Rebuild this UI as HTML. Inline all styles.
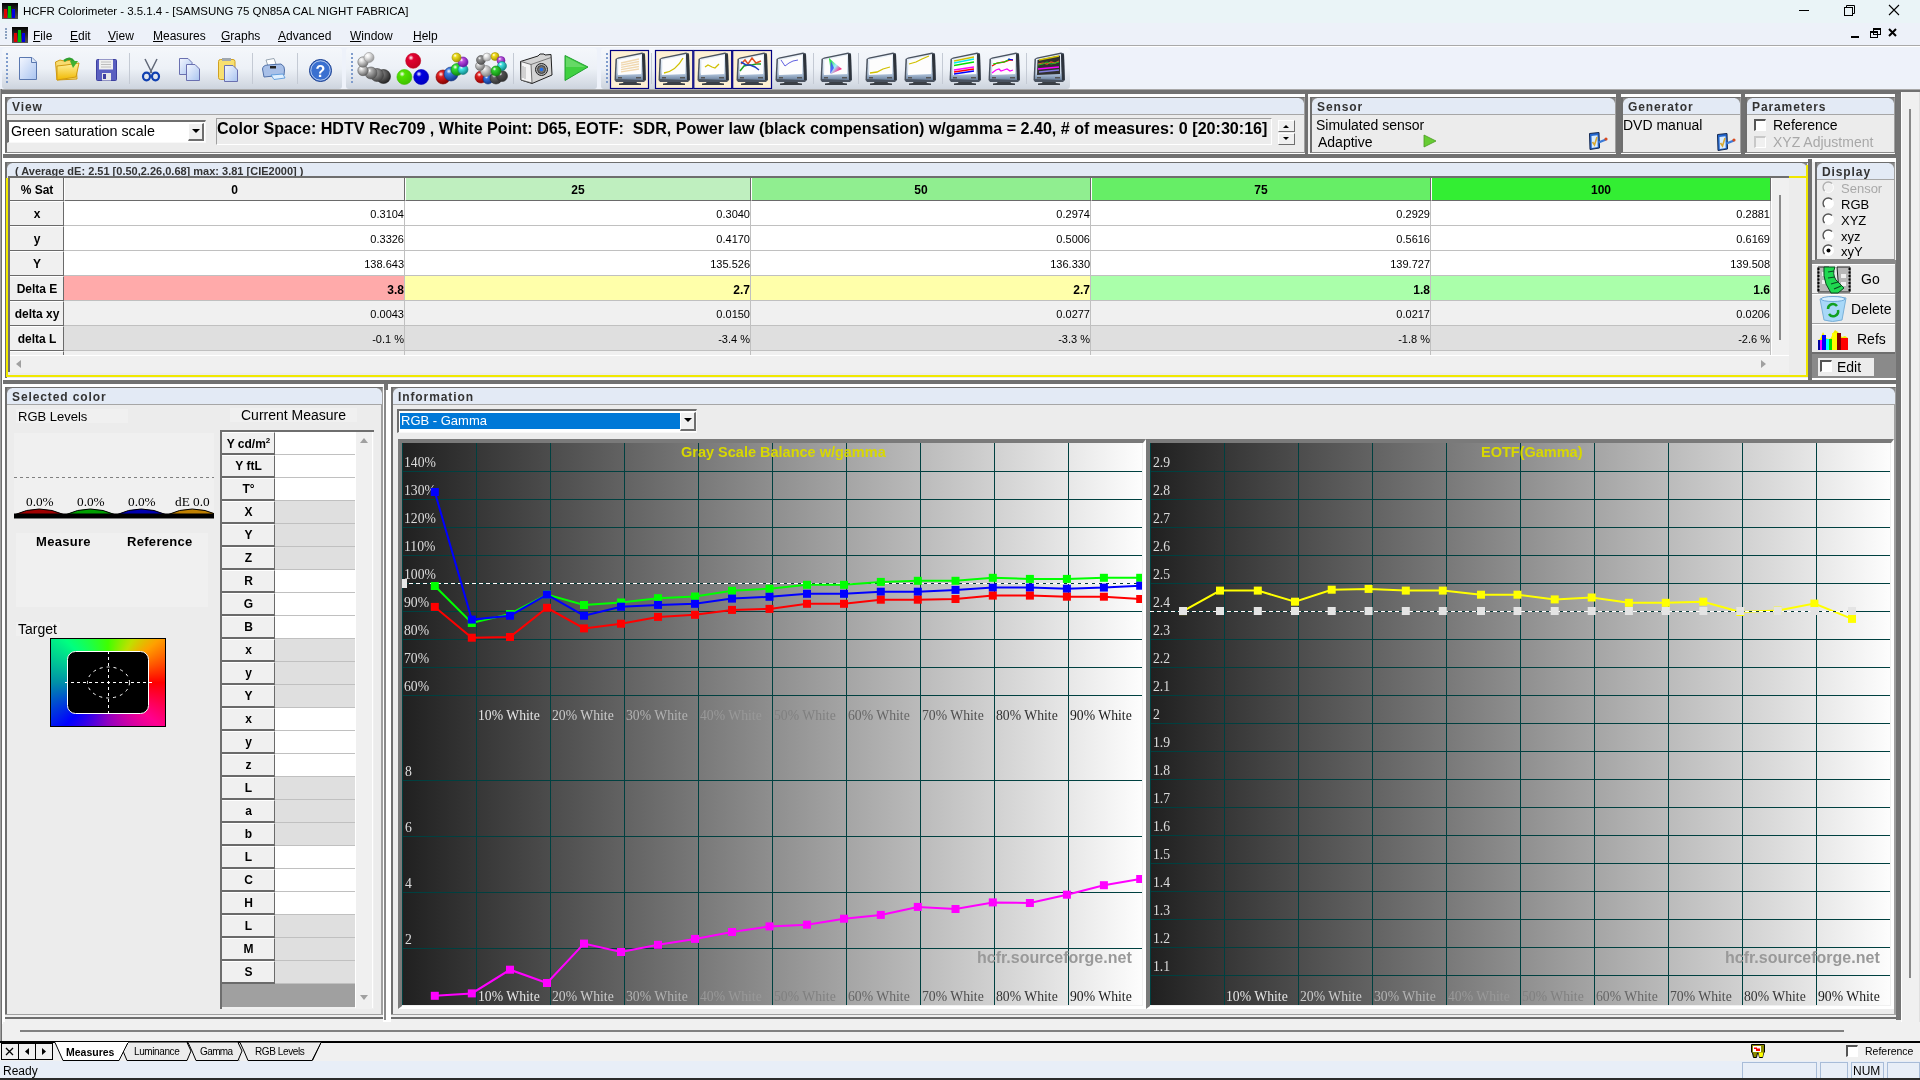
<!DOCTYPE html><html><head><meta charset="utf-8"><style>
html,body{margin:0;padding:0;width:1920px;height:1080px;overflow:hidden;background:#f0f0f0;font-family:"Liberation Sans",sans-serif;}
div{box-sizing:border-box;}
.u{text-decoration:underline;}
</style></head><body>
<div style="position:absolute;left:0px;top:0px;width:1920px;height:23px;background:#eaf4f7;"></div>
<svg style="position:absolute;left:2px;top:3px" width="16" height="16"><defs><linearGradient id="bg2" x1="0" y1="0" x2="0" y2="1"><stop offset="0" stop-color="#000"/><stop offset="1" stop-color="#555"/></linearGradient></defs><rect width="16" height="16" fill="url(#bg2)"/><rect x="2" y="6" width="3" height="9" fill="#e00000"/><rect x="6" y="3" width="3" height="12" fill="#00c000"/><rect x="10" y="6" width="3" height="9" fill="#0000e0"/></svg>
<div style="position:absolute;left:23px;top:6px;font-size:11.5px;line-height:1;color:#000;font-weight:normal;white-space:nowrap;font-family:'Liberation Sans', sans-serif;letter-spacing:-0.03px;">HCFR Colorimeter - 3.5.1.4 - [SAMSUNG 75 QN85A CAL NIGHT FABRICA]</div>
<svg style="position:absolute;left:1790px;top:0" width="130" height="23"><line x1="9" y1="10.5" x2="19" y2="10.5" stroke="#000" stroke-width="1"/><rect x="54.5" y="7.5" width="8" height="8" fill="none" stroke="#000"/><path d="M56.5 7.5 V5.5 H64.5 V13.5 H62.5" fill="none" stroke="#000"/><path d="M99 5 L109 15 M109 5 L99 15" stroke="#000" stroke-width="1.1"/></svg>
<div style="position:absolute;left:0px;top:23px;width:1920px;height:23px;background:#edf1f9;border-bottom:1px solid #a9a9a9;"></div>
<div style="position:absolute;left:5px;top:28px;width:2px;height:2px;background:#8aa0c0;"></div>
<div style="position:absolute;left:5px;top:31px;width:2px;height:2px;background:#8aa0c0;"></div>
<div style="position:absolute;left:5px;top:34px;width:2px;height:2px;background:#8aa0c0;"></div>
<div style="position:absolute;left:5px;top:37px;width:2px;height:2px;background:#8aa0c0;"></div>
<svg style="position:absolute;left:12px;top:27px" width="16" height="16"><defs><linearGradient id="bg12" x1="0" y1="0" x2="0" y2="1"><stop offset="0" stop-color="#000"/><stop offset="1" stop-color="#555"/></linearGradient></defs><rect width="16" height="16" fill="url(#bg12)"/><rect x="2" y="6" width="3" height="9" fill="#e00000"/><rect x="6" y="3" width="3" height="12" fill="#00c000"/><rect x="10" y="6" width="3" height="9" fill="#0000e0"/></svg>
<div style="position:absolute;left:33px;top:30px;font-size:12px;line-height:1;color:#000;font-weight:normal;white-space:nowrap;font-family:'Liberation Sans', sans-serif;"><span class="u">F</span>ile</div>
<div style="position:absolute;left:70px;top:30px;font-size:12px;line-height:1;color:#000;font-weight:normal;white-space:nowrap;font-family:'Liberation Sans', sans-serif;"><span class="u">E</span>dit</div>
<div style="position:absolute;left:108px;top:30px;font-size:12px;line-height:1;color:#000;font-weight:normal;white-space:nowrap;font-family:'Liberation Sans', sans-serif;"><span class="u">V</span>iew</div>
<div style="position:absolute;left:153px;top:30px;font-size:12px;line-height:1;color:#000;font-weight:normal;white-space:nowrap;font-family:'Liberation Sans', sans-serif;"><span class="u">M</span>easures</div>
<div style="position:absolute;left:221px;top:30px;font-size:12px;line-height:1;color:#000;font-weight:normal;white-space:nowrap;font-family:'Liberation Sans', sans-serif;"><span class="u">G</span>raphs</div>
<div style="position:absolute;left:278px;top:30px;font-size:12px;line-height:1;color:#000;font-weight:normal;white-space:nowrap;font-family:'Liberation Sans', sans-serif;"><span class="u">A</span>dvanced</div>
<div style="position:absolute;left:350px;top:30px;font-size:12px;line-height:1;color:#000;font-weight:normal;white-space:nowrap;font-family:'Liberation Sans', sans-serif;"><span class="u">W</span>indow</div>
<div style="position:absolute;left:413px;top:30px;font-size:12px;line-height:1;color:#000;font-weight:normal;white-space:nowrap;font-family:'Liberation Sans', sans-serif;"><span class="u">H</span>elp</div>
<svg style="position:absolute;left:1845px;top:26" width="75" height="17"><rect x="6" y="10" width="8" height="2" fill="#000"/><rect x="25.5" y="5.5" width="7" height="6" fill="none" stroke="#000"/><rect x="25" y="5" width="8" height="2" fill="#000"/><rect x="28.5" y="2.5" width="7" height="6" fill="none" stroke="#000"/><rect x="28" y="2" width="8" height="2" fill="#000"/><path d="M44 3 L51 10 M51 3 L44 10" stroke="#000" stroke-width="2"/></svg>
<div style="position:absolute;left:0px;top:46px;width:1920px;height:44px;background:#eef2fa;border-top:1px solid #fff;"></div>
<div style="position:absolute;left:2px;top:48px;width:340px;height:41px;background:linear-gradient(#f4f7fb,#edf1f7 50%,#cdd4de);border-radius:3px;"></div>
<div style="position:absolute;left:346px;top:48px;width:251px;height:41px;background:linear-gradient(#f4f7fb,#edf1f7 50%,#cdd4de);border-radius:3px;"></div>
<div style="position:absolute;left:601px;top:48px;width:469px;height:41px;background:linear-gradient(#f4f7fb,#edf1f7 50%,#cdd4de);border-radius:3px;"></div>
<div style="position:absolute;left:6px;top:53px;width:2px;height:2px;background:#7f9ccc;"></div>
<div style="position:absolute;left:6px;top:57px;width:2px;height:2px;background:#7f9ccc;"></div>
<div style="position:absolute;left:6px;top:61px;width:2px;height:2px;background:#7f9ccc;"></div>
<div style="position:absolute;left:6px;top:65px;width:2px;height:2px;background:#7f9ccc;"></div>
<div style="position:absolute;left:6px;top:69px;width:2px;height:2px;background:#7f9ccc;"></div>
<div style="position:absolute;left:6px;top:73px;width:2px;height:2px;background:#7f9ccc;"></div>
<div style="position:absolute;left:6px;top:77px;width:2px;height:2px;background:#7f9ccc;"></div>
<div style="position:absolute;left:6px;top:81px;width:2px;height:2px;background:#7f9ccc;"></div>
<div style="position:absolute;left:351px;top:53px;width:2px;height:2px;background:#7f9ccc;"></div>
<div style="position:absolute;left:351px;top:57px;width:2px;height:2px;background:#7f9ccc;"></div>
<div style="position:absolute;left:351px;top:61px;width:2px;height:2px;background:#7f9ccc;"></div>
<div style="position:absolute;left:351px;top:65px;width:2px;height:2px;background:#7f9ccc;"></div>
<div style="position:absolute;left:351px;top:69px;width:2px;height:2px;background:#7f9ccc;"></div>
<div style="position:absolute;left:351px;top:73px;width:2px;height:2px;background:#7f9ccc;"></div>
<div style="position:absolute;left:351px;top:77px;width:2px;height:2px;background:#7f9ccc;"></div>
<div style="position:absolute;left:351px;top:81px;width:2px;height:2px;background:#7f9ccc;"></div>
<div style="position:absolute;left:606px;top:53px;width:2px;height:2px;background:#7f9ccc;"></div>
<div style="position:absolute;left:606px;top:57px;width:2px;height:2px;background:#7f9ccc;"></div>
<div style="position:absolute;left:606px;top:61px;width:2px;height:2px;background:#7f9ccc;"></div>
<div style="position:absolute;left:606px;top:65px;width:2px;height:2px;background:#7f9ccc;"></div>
<div style="position:absolute;left:606px;top:69px;width:2px;height:2px;background:#7f9ccc;"></div>
<div style="position:absolute;left:606px;top:73px;width:2px;height:2px;background:#7f9ccc;"></div>
<div style="position:absolute;left:606px;top:77px;width:2px;height:2px;background:#7f9ccc;"></div>
<div style="position:absolute;left:606px;top:81px;width:2px;height:2px;background:#7f9ccc;"></div>
<svg style="position:absolute;left:0;top:46px" width="1100" height="43" viewBox="0 46 1100 43"><defs><linearGradient id="bez" x1="0" y1="0" x2="0" y2="1"><stop offset="0" stop-color="#eef4fa"/><stop offset="0.72" stop-color="#c8d6e6"/><stop offset="0.8" stop-color="#a8bcd4"/><stop offset="1" stop-color="#6a809c"/></linearGradient><linearGradient id="pg" x1="0" y1="0" x2="1" y2="1"><stop offset="0" stop-color="#f4f7ff"/><stop offset="1" stop-color="#a9c4f0"/></linearGradient><linearGradient id="fg" x1="0" y1="0" x2="0" y2="1"><stop offset="0" stop-color="#fff2a0"/><stop offset="1" stop-color="#f0b800"/></linearGradient></defs><line x1="129.5" y1="53" x2="129.5" y2="84" stroke="#c4cad4" stroke-width="1"/><line x1="252.5" y1="53" x2="252.5" y2="84" stroke="#c4cad4" stroke-width="1"/><line x1="297.5" y1="53" x2="297.5" y2="84" stroke="#c4cad4" stroke-width="1"/><line x1="513.5" y1="53" x2="513.5" y2="84" stroke="#c4cad4" stroke-width="1"/><line x1="651.5" y1="53" x2="651.5" y2="84" stroke="#c4cad4" stroke-width="1"/><line x1="813.5" y1="53" x2="813.5" y2="84" stroke="#c4cad4" stroke-width="1"/><line x1="858.5" y1="53" x2="858.5" y2="84" stroke="#c4cad4" stroke-width="1"/><line x1="942.5" y1="53" x2="942.5" y2="84" stroke="#c4cad4" stroke-width="1"/><line x1="1026.5" y1="53" x2="1026.5" y2="84" stroke="#c4cad4" stroke-width="1"/><path d="M19.5 57.5 H32 L36.5 62 V79.5 H19.5 Z" fill="url(#pg)" stroke="#5a78b0" stroke-width="1"/><path d="M31.5 57.5 V62.5 H36.5" fill="#dde8f8" stroke="#5a78b0"/><path d="M55.5 62 L60 60 L64 61 L73 60 L76 63 L77 79 L57 80 Z" fill="#f8dc70" stroke="#d09a10" stroke-width="1"/><path d="M57 66 L66 65 L79 63 L76 77 L57 80 Z" fill="url(#fg)" stroke="#d09a10" stroke-width="1"/><path d="M64 61 Q70 56 74 62" fill="none" stroke="#30a030" stroke-width="2.5"/><path d="M70 61 L78 61 L73 68 Z" fill="#40b030"/><rect x="96.5" y="59.5" width="20" height="21" rx="1" fill="#5a5fc0" stroke="#3c40a0"/><rect x="99" y="59.5" width="14" height="10" fill="#f0f0f0"/><path d="M101 62 H111 M101 64.5 H111 M101 67 H111" stroke="#b0b0b0" stroke-width="0.8"/><rect x="102" y="73" width="9" height="7.5" fill="#e8e8e8"/><rect x="103" y="74" width="3" height="5" fill="#4040a0"/><path d="M145 59 L152 73 M157 59 L150 73" stroke="#606878" stroke-width="1.5"/><ellipse cx="146.5" cy="76.5" rx="3.5" ry="3.8" fill="none" stroke="#1040b0" stroke-width="2.2"/><ellipse cx="155.5" cy="76.5" rx="3.5" ry="3.8" fill="none" stroke="#1040b0" stroke-width="2.2"/><path d="M179.5 58.5 H188 L192 62.5 V74.5 H179.5 Z" fill="url(#pg)" stroke="#6a70b0"/><path d="M186.5 64.5 H195 L199.5 69 V80.5 H186.5 Z" fill="url(#pg)" stroke="#6a70b0"/><rect x="218.5" y="59.5" width="16.5" height="20" rx="2" fill="#f8e070" stroke="#d0a020"/><rect x="222" y="58" width="9" height="3" fill="#a0a8b0"/><path d="M224.5 65.5 H233 L237.5 70 V81.5 H224.5 Z" fill="url(#pg)" stroke="#6a70b0"/><path d="M266 60 L274 58.5 L276 64 L268 66 Z" fill="#fff" stroke="#8090a0" stroke-width="0.8"/><path d="M262.5 69 Q263 65 268 65 L281 64 Q285 66 284.5 70 L284 75 L264 77 Z" fill="#a8c0e8" stroke="#5070a8"/><rect x="270" y="66" width="6" height="2.5" fill="#222"/><path d="M271 75 L283 74 L285 78 L274 79.5 Z" fill="#e0f0ff" stroke="#4a90d8" stroke-width="0.8"/><circle cx="320.5" cy="70.5" r="11" fill="#3a70d0" stroke="#1c4090" stroke-width="1"/><circle cx="320.5" cy="70.5" r="9.7" fill="none" stroke="#fff" stroke-width="0.8" opacity="0.8"/><text x="320.5" y="76.5" text-anchor="middle" font-family="Liberation Sans" font-weight="bold" font-size="16" fill="#fff">?</text><defs><radialGradient id="sp3835765" cx="0.35" cy="0.3" r="0.75"><stop offset="0" stop-color="#fff"/><stop offset="0.25" stop-color="#707070"/><stop offset="1" stop-color="#202020"/></radialGradient></defs><circle cx="383.5" cy="76.5" r="7" fill="url(#sp3835765)" stroke="#202020" stroke-width="0.6"/><defs><radialGradient id="sp3770750" cx="0.35" cy="0.3" r="0.75"><stop offset="0" stop-color="#fff"/><stop offset="0.25" stop-color="#909090"/><stop offset="1" stop-color="#404040"/></radialGradient></defs><circle cx="377" cy="75" r="6.5" fill="url(#sp3770750)" stroke="#404040" stroke-width="0.6"/><defs><radialGradient id="sp3710730" cx="0.35" cy="0.3" r="0.75"><stop offset="0" stop-color="#fff"/><stop offset="0.25" stop-color="#b0b0b0"/><stop offset="1" stop-color="#505050"/></radialGradient></defs><circle cx="371" cy="73" r="6" fill="url(#sp3710730)" stroke="#505050" stroke-width="0.6"/><defs><radialGradient id="sp3630705" cx="0.35" cy="0.3" r="0.75"><stop offset="0" stop-color="#fff"/><stop offset="0.25" stop-color="#d8d8d8"/><stop offset="1" stop-color="#606060"/></radialGradient></defs><circle cx="363" cy="70.5" r="5.2" fill="url(#sp3630705)" stroke="#606060" stroke-width="0.6"/><defs><radialGradient id="sp3630620" cx="0.35" cy="0.3" r="0.75"><stop offset="0" stop-color="#fff"/><stop offset="0.25" stop-color="#e0e0e0"/><stop offset="1" stop-color="#707070"/></radialGradient></defs><circle cx="363" cy="62" r="5.2" fill="url(#sp3630620)" stroke="#707070" stroke-width="0.6"/><defs><radialGradient id="sp3690575" cx="0.35" cy="0.3" r="0.75"><stop offset="0" stop-color="#fff"/><stop offset="0.25" stop-color="#f0f0f0"/><stop offset="1" stop-color="#909090"/></radialGradient></defs><circle cx="369" cy="57.5" r="5" fill="url(#sp3690575)" stroke="#909090" stroke-width="0.6"/><defs><radialGradient id="sp4132608" cx="0.35" cy="0.3" r="0.75"><stop offset="0" stop-color="#fff"/><stop offset="0.25" stop-color="#e00030"/><stop offset="1" stop-color="#c00020"/></radialGradient></defs><circle cx="413.2" cy="60.8" r="7.5" fill="url(#sp4132608)" stroke="#c00020" stroke-width="0.6"/><defs><radialGradient id="sp4044770" cx="0.35" cy="0.3" r="0.75"><stop offset="0" stop-color="#fff"/><stop offset="0.25" stop-color="#50e000"/><stop offset="1" stop-color="#40c000"/></radialGradient></defs><circle cx="404.4" cy="77" r="7.5" fill="url(#sp4044770)" stroke="#40c000" stroke-width="0.6"/><defs><radialGradient id="sp4212770" cx="0.35" cy="0.3" r="0.75"><stop offset="0" stop-color="#fff"/><stop offset="0.25" stop-color="#0000e0"/><stop offset="1" stop-color="#0000c0"/></radialGradient></defs><circle cx="421.2" cy="77" r="7.5" fill="url(#sp4212770)" stroke="#0000c0" stroke-width="0.6"/><defs><radialGradient id="sp4430770" cx="0.35" cy="0.3" r="0.75"><stop offset="0" stop-color="#fff"/><stop offset="0.25" stop-color="#e02020"/><stop offset="1" stop-color="#800000"/></radialGradient></defs><circle cx="443" cy="77" r="7" fill="url(#sp4430770)" stroke="#800000" stroke-width="0.6"/><defs><radialGradient id="sp4510740" cx="0.35" cy="0.3" r="0.75"><stop offset="0" stop-color="#fff"/><stop offset="0.25" stop-color="#4080e0"/><stop offset="1" stop-color="#103080"/></radialGradient></defs><circle cx="451" cy="74" r="7" fill="url(#sp4510740)" stroke="#103080" stroke-width="0.6"/><defs><radialGradient id="sp4570695" cx="0.35" cy="0.3" r="0.75"><stop offset="0" stop-color="#fff"/><stop offset="0.25" stop-color="#30e030"/><stop offset="1" stop-color="#108010"/></radialGradient></defs><circle cx="457" cy="69.5" r="6" fill="url(#sp4570695)" stroke="#108010" stroke-width="0.6"/><defs><radialGradient id="sp4630695" cx="0.35" cy="0.3" r="0.75"><stop offset="0" stop-color="#fff"/><stop offset="0.25" stop-color="#40e8e8"/><stop offset="1" stop-color="#108080"/></radialGradient></defs><circle cx="463" cy="69.5" r="5" fill="url(#sp4630695)" stroke="#108080" stroke-width="0.6"/><defs><radialGradient id="sp4630620" cx="0.35" cy="0.3" r="0.75"><stop offset="0" stop-color="#fff"/><stop offset="0.25" stop-color="#c050e0"/><stop offset="1" stop-color="#6010a0"/></radialGradient></defs><circle cx="463" cy="62" r="5" fill="url(#sp4630620)" stroke="#6010a0" stroke-width="0.6"/><defs><radialGradient id="sp4565575" cx="0.35" cy="0.3" r="0.75"><stop offset="0" stop-color="#fff"/><stop offset="0.25" stop-color="#f0e020"/><stop offset="1" stop-color="#a09000"/></radialGradient></defs><circle cx="456.5" cy="57.5" r="4.5" fill="url(#sp4565575)" stroke="#a09000" stroke-width="0.6"/><defs><radialGradient id="sp4810770" cx="0.35" cy="0.3" r="0.75"><stop offset="0" stop-color="#fff"/><stop offset="0.25" stop-color="#e02020"/><stop offset="1" stop-color="#900000"/></radialGradient></defs><circle cx="481" cy="77" r="6" fill="url(#sp4810770)" stroke="#900000" stroke-width="0.6"/><defs><radialGradient id="sp4880790" cx="0.35" cy="0.3" r="0.75"><stop offset="0" stop-color="#fff"/><stop offset="0.25" stop-color="#3070e0"/><stop offset="1" stop-color="#103080"/></radialGradient></defs><circle cx="488" cy="79" r="5" fill="url(#sp4880790)" stroke="#103080" stroke-width="0.6"/><defs><radialGradient id="sp4960780" cx="0.35" cy="0.3" r="0.75"><stop offset="0" stop-color="#fff"/><stop offset="0.25" stop-color="#606060"/><stop offset="1" stop-color="#303030"/></radialGradient></defs><circle cx="496" cy="78" r="6" fill="url(#sp4960780)" stroke="#303030" stroke-width="0.6"/><defs><radialGradient id="sp5020760" cx="0.35" cy="0.3" r="0.75"><stop offset="0" stop-color="#fff"/><stop offset="0.25" stop-color="#505050"/><stop offset="1" stop-color="#303030"/></radialGradient></defs><circle cx="502" cy="76" r="5.5" fill="url(#sp5020760)" stroke="#303030" stroke-width="0.6"/><defs><radialGradient id="sp4860710" cx="0.35" cy="0.3" r="0.75"><stop offset="0" stop-color="#fff"/><stop offset="0.25" stop-color="#d8d8d8"/><stop offset="1" stop-color="#808080"/></radialGradient></defs><circle cx="486" cy="71" r="5.5" fill="url(#sp4860710)" stroke="#808080" stroke-width="0.6"/><defs><radialGradient id="sp4800660" cx="0.35" cy="0.3" r="0.75"><stop offset="0" stop-color="#fff"/><stop offset="0.25" stop-color="#d0d0d0"/><stop offset="1" stop-color="#707070"/></radialGradient></defs><circle cx="480" cy="66" r="4.5" fill="url(#sp4800660)" stroke="#707070" stroke-width="0.6"/><defs><radialGradient id="sp4810600" cx="0.35" cy="0.3" r="0.75"><stop offset="0" stop-color="#fff"/><stop offset="0.25" stop-color="#909090"/><stop offset="1" stop-color="#505050"/></radialGradient></defs><circle cx="481" cy="60" r="4.5" fill="url(#sp4810600)" stroke="#505050" stroke-width="0.6"/><defs><radialGradient id="sp4870570" cx="0.35" cy="0.3" r="0.75"><stop offset="0" stop-color="#fff"/><stop offset="0.25" stop-color="#f0f0f0"/><stop offset="1" stop-color="#a0a0a0"/></radialGradient></defs><circle cx="487" cy="57" r="4" fill="url(#sp4870570)" stroke="#a0a0a0" stroke-width="0.6"/><defs><radialGradient id="sp4950565" cx="0.35" cy="0.3" r="0.75"><stop offset="0" stop-color="#fff"/><stop offset="0.25" stop-color="#f8e020"/><stop offset="1" stop-color="#a09000"/></radialGradient></defs><circle cx="495" cy="56.5" r="4" fill="url(#sp4950565)" stroke="#a09000" stroke-width="0.6"/><defs><radialGradient id="sp5010605" cx="0.35" cy="0.3" r="0.75"><stop offset="0" stop-color="#fff"/><stop offset="0.25" stop-color="#c060e0"/><stop offset="1" stop-color="#7010a0"/></radialGradient></defs><circle cx="501" cy="60.5" r="4" fill="url(#sp5010605)" stroke="#7010a0" stroke-width="0.6"/><defs><radialGradient id="sp5020660" cx="0.35" cy="0.3" r="0.75"><stop offset="0" stop-color="#fff"/><stop offset="0.25" stop-color="#40e0e0"/><stop offset="1" stop-color="#108080"/></radialGradient></defs><circle cx="502" cy="66" r="4.5" fill="url(#sp5020660)" stroke="#108080" stroke-width="0.6"/><defs><radialGradient id="sp4960710" cx="0.35" cy="0.3" r="0.75"><stop offset="0" stop-color="#fff"/><stop offset="0.25" stop-color="#30d030"/><stop offset="1" stop-color="#108010"/></radialGradient></defs><circle cx="496" cy="71" r="5" fill="url(#sp4960710)" stroke="#108010" stroke-width="0.6"/><path d="M520.5 61.5 L538 56 L540 54 L544 54 L545 55 L551 54.5 L552 75 L532 83.5 L521 80 Z" fill="#d4d4d4" stroke="#202020" stroke-width="1"/><path d="M521 61.5 L531 64.5 L532 83 L521 80 Z" fill="#f4f4f4" stroke="#505050" stroke-width="0.8"/><path d="M531 64.5 L551 57.5" stroke="#606060" stroke-width="0.8"/><path d="M523 66 V78 M525 67 V79" stroke="#a0a0a0" stroke-width="0.8"/><circle cx="541.5" cy="69.5" r="6" fill="#b0b0b0" stroke="#202020" stroke-width="1"/><circle cx="541.5" cy="69.5" r="4" fill="#707070" stroke="#303030" stroke-width="0.8"/><circle cx="541.5" cy="69.5" r="1.8" fill="#2070f0"/><path d="M565 55.5 L588 67 L565 80.5 Z" fill="#40d040" stroke="#20a030" stroke-width="1"/><path d="M566 57 L585 67 L566 67 Z" fill="#80e080" opacity="0.6"/><rect x="610.5" y="50.5" width="38" height="38" fill="#fdf0d4" stroke="#000080" stroke-width="1.2"/><rect x="655.5" y="50.5" width="37.299999999999955" height="38" fill="#fdf0d4" stroke="#000080" stroke-width="1.2"/><rect x="693.8" y="50.5" width="37.90000000000009" height="38" fill="#fdf0d4" stroke="#000080" stroke-width="1.2"/><rect x="732.7" y="50.5" width="38.799999999999955" height="38" fill="#fdf0d4" stroke="#000080" stroke-width="1.2"/><g transform="translate(614,49)"><path d="M10 32 L22 32 L23 34 L27 34.5 L27 36 L5 36 L5 34.5 L9 34 Z" fill="#3a3f46"/><path d="M0.5 31 L1.5 10 L4 8.5 L28 3.5 L31 4.5 L32 31 L30 33 L2 33 Z" fill="#4a5360"/><path d="M2 30 L3 10 L28 5 L29 31 Z" fill="url(#bez)"/><path d="M28 5 L31 5.5 L31.5 31 L29 31 Z" fill="#2e343c"/><path d="M4 26 L4.5 11 L27 6.5 L27 25 Z" fill="#fdfdfd"/><rect x="4" y="28" width="4" height="1.5" fill="#555"/><rect x="22" y="28" width="5" height="1.5" fill="#555"/><path d="M7 14.0 L25 10.0" stroke="#f0d8b0" stroke-width="1.3"/><path d="M7 16.2 L25 12.5" stroke="#f0d8b0" stroke-width="1.3"/><path d="M7 18.4 L25 15.0" stroke="#f0d8b0" stroke-width="1.3"/><path d="M7 20.6 L25 17.5" stroke="#f0d8b0" stroke-width="1.3"/><path d="M7 22.8 L25 20.0" stroke="#f0d8b0" stroke-width="1.3"/></g><g transform="translate(658,49)"><path d="M10 32 L22 32 L23 34 L27 34.5 L27 36 L5 36 L5 34.5 L9 34 Z" fill="#3a3f46"/><path d="M0.5 31 L1.5 10 L4 8.5 L28 3.5 L31 4.5 L32 31 L30 33 L2 33 Z" fill="#4a5360"/><path d="M2 30 L3 10 L28 5 L29 31 Z" fill="url(#bez)"/><path d="M28 5 L31 5.5 L31.5 31 L29 31 Z" fill="#2e343c"/><path d="M4 26 L4.5 11 L27 6.5 L27 25 Z" fill="#fdfdfd"/><rect x="4" y="28" width="4" height="1.5" fill="#555"/><rect x="22" y="28" width="5" height="1.5" fill="#555"/><path d="M6 24 Q18 22 25 9" fill="none" stroke="#d0c000" stroke-width="1.3"/></g><g transform="translate(697,49)"><path d="M10 32 L22 32 L23 34 L27 34.5 L27 36 L5 36 L5 34.5 L9 34 Z" fill="#3a3f46"/><path d="M0.5 31 L1.5 10 L4 8.5 L28 3.5 L31 4.5 L32 31 L30 33 L2 33 Z" fill="#4a5360"/><path d="M2 30 L3 10 L28 5 L29 31 Z" fill="url(#bez)"/><path d="M28 5 L31 5.5 L31.5 31 L29 31 Z" fill="#2e343c"/><path d="M4 26 L4.5 11 L27 6.5 L27 25 Z" fill="#fdfdfd"/><rect x="4" y="28" width="4" height="1.5" fill="#555"/><rect x="22" y="28" width="5" height="1.5" fill="#555"/><path d="M8 18 L11 16 L15 18 L18 19 L22 15" fill="none" stroke="#d0c000" stroke-width="1.3"/></g><g transform="translate(736,49)"><path d="M10 32 L22 32 L23 34 L27 34.5 L27 36 L5 36 L5 34.5 L9 34 Z" fill="#3a3f46"/><path d="M0.5 31 L1.5 10 L4 8.5 L28 3.5 L31 4.5 L32 31 L30 33 L2 33 Z" fill="#4a5360"/><path d="M2 30 L3 10 L28 5 L29 31 Z" fill="url(#bez)"/><path d="M28 5 L31 5.5 L31.5 31 L29 31 Z" fill="#2e343c"/><path d="M4 26 L4.5 11 L27 6.5 L27 25 Z" fill="#fdfdfd"/><rect x="4" y="28" width="4" height="1.5" fill="#555"/><rect x="22" y="28" width="5" height="1.5" fill="#555"/><path d="M4 22 L8 17 L12 16 L16 16 L20 15 L25 15" fill="none" stroke="#20a020" stroke-width="1.5"/><path d="M5 15 L9 11 L12 15 L16 9 L20 14 L25 12" fill="none" stroke="#e05020" stroke-width="1.5"/><path d="M5 13 L10 16 L14 16 L19 18 L23 21" fill="none" stroke="#2040c0" stroke-width="1.5"/></g><g transform="translate(775,49)"><path d="M10 32 L22 32 L23 34 L27 34.5 L27 36 L5 36 L5 34.5 L9 34 Z" fill="#3a3f46"/><path d="M0.5 31 L1.5 10 L4 8.5 L28 3.5 L31 4.5 L32 31 L30 33 L2 33 Z" fill="#4a5360"/><path d="M2 30 L3 10 L28 5 L29 31 Z" fill="url(#bez)"/><path d="M28 5 L31 5.5 L31.5 31 L29 31 Z" fill="#2e343c"/><path d="M4 26 L4.5 11 L27 6.5 L27 25 Z" fill="#fdfdfd"/><rect x="4" y="28" width="4" height="1.5" fill="#555"/><rect x="22" y="28" width="5" height="1.5" fill="#555"/><path d="M6 11 L10 17 L14 14 L18 12 L23 11" fill="none" stroke="#6060e0" stroke-width="1"/></g><g transform="translate(820,49)"><path d="M10 32 L22 32 L23 34 L27 34.5 L27 36 L5 36 L5 34.5 L9 34 Z" fill="#3a3f46"/><path d="M0.5 31 L1.5 10 L4 8.5 L28 3.5 L31 4.5 L32 31 L30 33 L2 33 Z" fill="#4a5360"/><path d="M2 30 L3 10 L28 5 L29 31 Z" fill="url(#bez)"/><path d="M28 5 L31 5.5 L31.5 31 L29 31 Z" fill="#2e343c"/><path d="M4 26 L4.5 11 L27 6.5 L27 25 Z" fill="#fdfdfd"/><rect x="4" y="28" width="4" height="1.5" fill="#555"/><rect x="22" y="28" width="5" height="1.5" fill="#555"/><defs><linearGradient id="cie" x1="0" y1="0" x2="1" y2="1"><stop offset="0" stop-color="#00e000"/><stop offset="0.5" stop-color="#a0f0ff"/><stop offset="0.8" stop-color="#ff2080"/><stop offset="1" stop-color="#ff0000"/></linearGradient></defs><path d="M9 9 Q12 12 22 20 L11 25 Z" fill="url(#cie)"/><path d="M10 25 L14 19 L11 12" fill="#3030ff" opacity="0.7"/></g><g transform="translate(865,49)"><path d="M10 32 L22 32 L23 34 L27 34.5 L27 36 L5 36 L5 34.5 L9 34 Z" fill="#3a3f46"/><path d="M0.5 31 L1.5 10 L4 8.5 L28 3.5 L31 4.5 L32 31 L30 33 L2 33 Z" fill="#4a5360"/><path d="M2 30 L3 10 L28 5 L29 31 Z" fill="url(#bez)"/><path d="M28 5 L31 5.5 L31.5 31 L29 31 Z" fill="#2e343c"/><path d="M4 26 L4.5 11 L27 6.5 L27 25 Z" fill="#fdfdfd"/><rect x="4" y="28" width="4" height="1.5" fill="#555"/><rect x="22" y="28" width="5" height="1.5" fill="#555"/><path d="M5 24 L12 23 L18 20 L25 18" fill="none" stroke="#d0c000" stroke-width="1.3"/></g><g transform="translate(904,49)"><path d="M10 32 L22 32 L23 34 L27 34.5 L27 36 L5 36 L5 34.5 L9 34 Z" fill="#3a3f46"/><path d="M0.5 31 L1.5 10 L4 8.5 L28 3.5 L31 4.5 L32 31 L30 33 L2 33 Z" fill="#4a5360"/><path d="M2 30 L3 10 L28 5 L29 31 Z" fill="url(#bez)"/><path d="M28 5 L31 5.5 L31.5 31 L29 31 Z" fill="#2e343c"/><path d="M4 26 L4.5 11 L27 6.5 L27 25 Z" fill="#fdfdfd"/><rect x="4" y="28" width="4" height="1.5" fill="#555"/><rect x="22" y="28" width="5" height="1.5" fill="#555"/><path d="M5 15 L12 13 L18 10 L25 7" fill="none" stroke="#d0c000" stroke-width="1.3"/></g><g transform="translate(949,49)"><path d="M10 32 L22 32 L23 34 L27 34.5 L27 36 L5 36 L5 34.5 L9 34 Z" fill="#3a3f46"/><path d="M0.5 31 L1.5 10 L4 8.5 L28 3.5 L31 4.5 L32 31 L30 33 L2 33 Z" fill="#4a5360"/><path d="M2 30 L3 10 L28 5 L29 31 Z" fill="url(#bez)"/><path d="M28 5 L31 5.5 L31.5 31 L29 31 Z" fill="#2e343c"/><path d="M4 26 L4.5 11 L27 6.5 L27 25 Z" fill="#fdfdfd"/><rect x="4" y="28" width="4" height="1.5" fill="#555"/><rect x="22" y="28" width="5" height="1.5" fill="#555"/><path d="M5 12 L25 8" stroke="#d0c000" stroke-width="1.3"/><path d="M5 14 L25 10" stroke="#00e8f0" stroke-width="1.3"/><path d="M5 16.5 L25 13" stroke="#00e000" stroke-width="1.3"/><path d="M5 21 L25 18" stroke="#ff00ff" stroke-width="1.3"/><path d="M5 23 L25 20" stroke="#f00" stroke-width="1.3"/><path d="M5 25 L25 22" stroke="#00f" stroke-width="1.3"/></g><g transform="translate(988,49)"><path d="M10 32 L22 32 L23 34 L27 34.5 L27 36 L5 36 L5 34.5 L9 34 Z" fill="#3a3f46"/><path d="M0.5 31 L1.5 10 L4 8.5 L28 3.5 L31 4.5 L32 31 L30 33 L2 33 Z" fill="#4a5360"/><path d="M2 30 L3 10 L28 5 L29 31 Z" fill="url(#bez)"/><path d="M28 5 L31 5.5 L31.5 31 L29 31 Z" fill="#2e343c"/><path d="M4 26 L4.5 11 L27 6.5 L27 25 Z" fill="#fdfdfd"/><rect x="4" y="28" width="4" height="1.5" fill="#555"/><rect x="22" y="28" width="5" height="1.5" fill="#555"/><path d="M4 17 L9 14 L16 13 L22 11 L25 11" fill="none" stroke="#f00" stroke-width="1.3"/><path d="M5 15 L10 14 L16 13 L22 10" fill="none" stroke="#00e000" stroke-width="1.2"/><path d="M20 10 L25 11" stroke="#0000ff" stroke-width="1.2"/><path d="M4 24 L8 21 L11 20 L13 22 L16 21 L19 20 L22 22 L25 21" fill="none" stroke="#ff00ff" stroke-width="1.3"/></g><g transform="translate(1033,49)"><path d="M10 32 L22 32 L23 34 L27 34.5 L27 36 L5 36 L5 34.5 L9 34 Z" fill="#3a3f46"/><path d="M0.5 31 L1.5 10 L4 8.5 L28 3.5 L31 4.5 L32 31 L30 33 L2 33 Z" fill="#4a5360"/><path d="M2 30 L3 10 L28 5 L29 31 Z" fill="url(#bez)"/><path d="M28 5 L31 5.5 L31.5 31 L29 31 Z" fill="#2e343c"/><path d="M4 26 L4.5 11 L27 6.5 L27 25 Z" fill="#303030"/><rect x="4" y="28" width="4" height="1.5" fill="#555"/><rect x="22" y="28" width="5" height="1.5" fill="#555"/><path d="M6 11 L26 7" stroke="#d0c000" stroke-width="1.3"/><path d="M5 15 L10 14 L14 15 L18 13 L22 14 L26 12" fill="none" stroke="#e06020" stroke-width="1.2"/><path d="M5 16 L10 15 L14 13 L18 15 L26 13" fill="none" stroke="#20c020" stroke-width="1"/><path d="M5 20 L26 18" stroke="#ff00ff" stroke-width="1.3"/><path d="M6 23 L26 21" stroke="#8080e0" stroke-width="1.3"/></g></svg>
<div style="position:absolute;left:0px;top:89px;width:1920px;height:1px;background:#a8a8a8;"></div>
<div style="position:absolute;left:0px;top:90px;width:1920px;height:4px;background:#717171;"></div>
<div style="position:absolute;left:0px;top:89px;width:2px;height:953px;background:#a0a0a0;border-right:1px solid #6e6e6e;"></div>
<div style="position:absolute;left:2px;top:94px;width:3px;height:930px;background:#fff;"></div>
<div style="position:absolute;left:5px;top:94px;width:1915px;height:986px;background:#f0f0f0;"></div>
<div style="position:absolute;left:3px;top:94px;width:1897px;height:3px;background:#fff;"></div>
<div style="position:absolute;left:3px;top:153px;width:1897px;height:1px;background:#fff;"></div>
<div style="position:absolute;left:3px;top:154px;width:1893px;height:4px;background:#717171;"></div>
<div style="position:absolute;left:3px;top:158px;width:1893px;height:4px;background:#fff;"></div>
<div style="position:absolute;left:5px;top:97px;width:1300px;height:56px;background:#ececec;border-top:1px solid #6e6e6e;border-left:2px solid #6e6e6e;border-right:1px solid #a0a0a0;border-bottom:1px solid #8a8a8a;"></div>
<div style="position:absolute;left:7px;top:98px;width:5px;height:5px;background:#8a8a8a;"></div>
<div style="position:absolute;left:1299px;top:98px;width:5px;height:5px;background:#8a8a8a;"></div>
<div style="position:absolute;left:7px;top:98px;width:1297px;height:17px;background:#e3eaf5;border-top-left-radius:6px;border-top-right-radius:6px;border-bottom:1px solid #a6a6a6;"></div>
<div style="position:absolute;left:12px;top:101px;font-size:12px;line-height:1;color:#333;font-weight:bold;white-space:nowrap;font-family:'Liberation Sans', sans-serif;letter-spacing:0.9px">View</div>
<div style="position:absolute;left:7px;top:120px;width:199px;height:23px;background:#fff;border-top:2px solid #6e6e6e;border-left:2px solid #6e6e6e;border-bottom:1px solid #f8f8f8;border-right:1px solid #f8f8f8;"></div>
<div style="position:absolute;left:11px;top:124px;font-size:14.3px;line-height:1;color:#000;font-weight:normal;white-space:nowrap;font-family:'Liberation Sans', sans-serif;">Green saturation scale</div>
<div style="position:absolute;left:188px;top:123px;width:16px;height:18px;background:#f0f0f0;border-right:2px solid #6e6e6e;border-bottom:2px solid #6e6e6e;border-top:1px solid #fff;border-left:1px solid #fff;"></div>
<svg style="position:absolute;left:190px;top:129px" width="12" height="6"><path d="M2 0 H10 L6 4 Z" fill="#000"/></svg>
<div style="position:absolute;left:216px;top:118px;width:1056px;height:27px;background:#ececec;border-top:1px solid #a0a0a0;border-left:1px solid #a0a0a0;border-bottom:1px solid #fff;border-right:1px solid #fff;"></div>
<div style="position:absolute;left:217px;top:120px;font-size:16.1px;line-height:1;color:#000;font-weight:bold;white-space:nowrap;font-family:'Liberation Sans', sans-serif;">Color Space: HDTV Rec709 , White Point: D65, EOTF:&nbsp; SDR, Power law (black compensation) w/gamma = 2.40, # of measures: 0 [20:30:16]</div>
<div style="position:absolute;left:1278px;top:120px;width:17px;height:12px;background:#f0f0f0;border-right:1px solid #6e6e6e;border-bottom:1px solid #6e6e6e;border-top:1px solid #fff;border-left:1px solid #fff;"></div>
<div style="position:absolute;left:1278px;top:133px;width:17px;height:12px;background:#f0f0f0;border-right:1px solid #6e6e6e;border-bottom:1px solid #6e6e6e;border-top:1px solid #fff;border-left:1px solid #fff;"></div>
<svg style="position:absolute;left:1281px;top:123px" width="10" height="20"><path d="M2 5 H8 L5 2 Z" fill="#000"/><path d="M2 14 H8 L5 17 Z" fill="#000"/></svg>
<div style="position:absolute;left:1305px;top:94px;width:3px;height:62px;background:#717171;"></div>
<div style="position:absolute;left:1310px;top:97px;width:306px;height:56px;background:#ececec;border-top:1px solid #6e6e6e;border-left:2px solid #6e6e6e;border-right:1px solid #a0a0a0;border-bottom:1px solid #8a8a8a;"></div>
<div style="position:absolute;left:1312px;top:98px;width:5px;height:5px;background:#8a8a8a;"></div>
<div style="position:absolute;left:1610px;top:98px;width:5px;height:5px;background:#8a8a8a;"></div>
<div style="position:absolute;left:1312px;top:98px;width:303px;height:17px;background:#e3eaf5;border-top-left-radius:6px;border-top-right-radius:6px;border-bottom:1px solid #a6a6a6;"></div>
<div style="position:absolute;left:1317px;top:101px;font-size:12px;line-height:1;color:#333;font-weight:bold;white-space:nowrap;font-family:'Liberation Sans', sans-serif;letter-spacing:0.9px">Sensor</div>
<div style="position:absolute;left:1316px;top:118px;font-size:14px;line-height:1;color:#000;font-weight:normal;white-space:nowrap;font-family:'Liberation Sans', sans-serif;">Simulated sensor</div>
<div style="position:absolute;left:1318px;top:135px;font-size:14px;line-height:1;color:#000;font-weight:normal;white-space:nowrap;font-family:'Liberation Sans', sans-serif;">Adaptive</div>
<svg style="position:absolute;left:1423px;top:134px" width="14" height="14"><path d="M1 1 L13 7 L1 13 Z" fill="#66cc33" stroke="#4a9a22" stroke-width="0.8"/></svg>
<svg style="position:absolute;left:1588px;top:131px" width="22" height="20"><path d="M1.5 2.5 L11 1.5 L11.5 17 L2 18.5 Z" fill="#2468d0" stroke="#142850" stroke-width="1"/><path d="M3.5 5 L9.5 4.3 L9.7 16 L3.8 17 Z" fill="#d8ecff"/><path d="M4.5 11 L6.5 14 L9 6" fill="none" stroke="#d8a830" stroke-width="1.6"/><path d="M10.5 11.5 L18 8.5" stroke="#3a7ad8" stroke-width="2.2"/><circle cx="18" cy="8" r="1.6" fill="#d84a20"/></svg>
<div style="position:absolute;left:1616px;top:94px;width:5px;height:62px;background:#717171;"></div>
<div style="position:absolute;left:1621px;top:97px;width:120px;height:56px;background:#ececec;border-top:1px solid #6e6e6e;border-left:2px solid #6e6e6e;border-right:1px solid #a0a0a0;border-bottom:1px solid #8a8a8a;"></div>
<div style="position:absolute;left:1623px;top:98px;width:5px;height:5px;background:#8a8a8a;"></div>
<div style="position:absolute;left:1735px;top:98px;width:5px;height:5px;background:#8a8a8a;"></div>
<div style="position:absolute;left:1623px;top:98px;width:117px;height:17px;background:#e3eaf5;border-top-left-radius:6px;border-top-right-radius:6px;border-bottom:1px solid #a6a6a6;"></div>
<div style="position:absolute;left:1628px;top:101px;font-size:12px;line-height:1;color:#333;font-weight:bold;white-space:nowrap;font-family:'Liberation Sans', sans-serif;letter-spacing:0.9px">Generator</div>
<div style="position:absolute;left:1623px;top:118px;font-size:14px;line-height:1;color:#000;font-weight:normal;white-space:nowrap;font-family:'Liberation Sans', sans-serif;">DVD manual</div>
<svg style="position:absolute;left:1716px;top:132px" width="22" height="20"><path d="M1.5 2.5 L11 1.5 L11.5 17 L2 18.5 Z" fill="#2468d0" stroke="#142850" stroke-width="1"/><path d="M3.5 5 L9.5 4.3 L9.7 16 L3.8 17 Z" fill="#d8ecff"/><path d="M4.5 11 L6.5 14 L9 6" fill="none" stroke="#d8a830" stroke-width="1.6"/><path d="M10.5 11.5 L18 8.5" stroke="#3a7ad8" stroke-width="2.2"/><circle cx="18" cy="8" r="1.6" fill="#d84a20"/></svg>
<div style="position:absolute;left:1741px;top:94px;width:4px;height:62px;background:#717171;"></div>
<div style="position:absolute;left:1745px;top:97px;width:150px;height:56px;background:#ececec;border-top:1px solid #6e6e6e;border-left:2px solid #6e6e6e;border-right:1px solid #a0a0a0;border-bottom:1px solid #8a8a8a;"></div>
<div style="position:absolute;left:1747px;top:98px;width:5px;height:5px;background:#8a8a8a;"></div>
<div style="position:absolute;left:1889px;top:98px;width:5px;height:5px;background:#8a8a8a;"></div>
<div style="position:absolute;left:1747px;top:98px;width:147px;height:17px;background:#e3eaf5;border-top-left-radius:6px;border-top-right-radius:6px;border-bottom:1px solid #a6a6a6;"></div>
<div style="position:absolute;left:1752px;top:101px;font-size:12px;line-height:1;color:#333;font-weight:bold;white-space:nowrap;font-family:'Liberation Sans', sans-serif;letter-spacing:0.9px">Parameters</div>
<div style="position:absolute;left:1754px;top:119px;width:12px;height:12px;background:#fff;border-top:2px solid #555;border-left:2px solid #555;border-right:1px solid #fff;border-bottom:1px solid #fff;"></div>
<div style="position:absolute;left:1773px;top:118px;font-size:14px;line-height:1;color:#000;font-weight:normal;white-space:nowrap;font-family:'Liberation Sans', sans-serif;">Reference</div>
<div style="position:absolute;left:1754px;top:136px;width:12px;height:12px;background:#f0f0f0;border-top:2px solid #c8c8c8;border-left:2px solid #c8c8c8;border-right:1px solid #fff;border-bottom:1px solid #fff;"></div>
<div style="position:absolute;left:1773px;top:135px;font-size:14px;line-height:1;color:#a8a8a8;font-weight:normal;white-space:nowrap;font-family:'Liberation Sans', sans-serif;">XYZ Adjustment</div>
<div style="position:absolute;left:1895px;top:94px;width:5px;height:62px;background:#717171;"></div>
<div style="position:absolute;left:5px;top:162px;width:1803px;height:216px;background:#ececec;border-top:1px solid #6e6e6e;border-left:2px solid #6e6e6e;"></div>
<div style="position:absolute;left:7px;top:163px;width:5px;height:5px;background:#8a8a8a;"></div>
<div style="position:absolute;left:1802px;top:163px;width:5px;height:5px;background:#8a8a8a;"></div>
<div style="position:absolute;left:7px;top:163px;width:1800px;height:14px;background:#e3eaf5;border-top-left-radius:6px;border-top-right-radius:6px;"></div>
<div style="position:absolute;left:15px;top:166px;font-size:11px;line-height:1;color:#333;font-weight:bold;white-space:nowrap;font-family:'Liberation Sans', sans-serif;">( Average dE: 2.51 [0.50,2.26,0.68] max: 3.81 [CIE2000] )</div>
<div style="position:absolute;left:6px;top:178px;width:2px;height:199px;background:#f0e800;"></div>
<div style="position:absolute;left:6px;top:375px;width:1802px;height:2px;background:#f0e800;"></div>
<div style="position:absolute;left:1806px;top:165px;width:2px;height:212px;background:#f0e800;"></div>
<div style="position:absolute;left:1789px;top:176px;width:19px;height:2px;background:#f0e800;"></div>
<div style="position:absolute;left:8px;top:176px;width:1781px;height:2px;background:#6e6e6e;"></div>
<div style="position:absolute;left:8px;top:176px;width:2px;height:196px;background:#6e6e6e;"></div>
<div style="position:absolute;left:10px;top:178px;width:1761px;height:177px;overflow:hidden;">
<div style="position:absolute;left:0px;top:0px;width:54px;height:23px;background:#f0f0f0;border-right:1px solid #6a6a6a;border-bottom:1px solid #6a6a6a;"></div>
<div style="position:absolute;left:0px;top:6px;font-size:12px;line-height:1;color:#000;font-weight:bold;white-space:nowrap;"><div style="width:54px;text-align:center">% Sat</div></div>
<div style="position:absolute;left:54px;top:0px;width:341px;height:23px;background:#f0f0f0;border-right:1px solid #6a6a6a;border-bottom:1px solid #6a6a6a;border-left:1px solid #fff;"></div>
<div style="position:absolute;left:54px;top:6px;font-size:12px;line-height:1;color:#000;font-weight:bold;white-space:nowrap;"><div style="width:341px;text-align:center">0</div></div>
<div style="position:absolute;left:395px;top:0px;width:346px;height:23px;background:#bfefbf;border-right:1px solid #6a6a6a;border-bottom:1px solid #6a6a6a;border-left:1px solid #fff;"></div>
<div style="position:absolute;left:395px;top:6px;font-size:12px;line-height:1;color:#000;font-weight:bold;white-space:nowrap;"><div style="width:346px;text-align:center">25</div></div>
<div style="position:absolute;left:741px;top:0px;width:340px;height:23px;background:#90ee90;border-right:1px solid #6a6a6a;border-bottom:1px solid #6a6a6a;border-left:1px solid #fff;"></div>
<div style="position:absolute;left:741px;top:6px;font-size:12px;line-height:1;color:#000;font-weight:bold;white-space:nowrap;"><div style="width:340px;text-align:center">50</div></div>
<div style="position:absolute;left:1081px;top:0px;width:340px;height:23px;background:#66ee66;border-right:1px solid #6a6a6a;border-bottom:1px solid #6a6a6a;border-left:1px solid #fff;"></div>
<div style="position:absolute;left:1081px;top:6px;font-size:12px;line-height:1;color:#000;font-weight:bold;white-space:nowrap;"><div style="width:340px;text-align:center">75</div></div>
<div style="position:absolute;left:1421px;top:0px;width:340px;height:23px;background:#33ee33;border-right:1px solid #6a6a6a;border-bottom:1px solid #6a6a6a;border-left:1px solid #fff;"></div>
<div style="position:absolute;left:1421px;top:6px;font-size:12px;line-height:1;color:#000;font-weight:bold;white-space:nowrap;"><div style="width:340px;text-align:center">100</div></div>
<div style="position:absolute;left:0px;top:23px;width:54px;height:25px;background:#f0f0f0;border-right:1px solid #6a6a6a;border-bottom:1px solid #6a6a6a;border-top:1px solid #fff;"></div>
<div style="position:absolute;left:0px;top:30px;font-size:12px;line-height:1;color:#000;font-weight:bold;white-space:nowrap;"><div style="width:54px;text-align:center">x</div></div>
<div style="position:absolute;left:54px;top:23px;width:341px;height:25px;background:#ffffff;border-right:1px solid #c0c0c0;border-bottom:1px solid #c0c0c0;"></div>
<div style="position:absolute;left:54px;top:31px;font-size:11px;line-height:1;color:#000;font-weight:normal;white-space:nowrap;"><div style="width:340px;text-align:right">0.3104</div></div>
<div style="position:absolute;left:395px;top:23px;width:346px;height:25px;background:#ffffff;border-right:1px solid #c0c0c0;border-bottom:1px solid #c0c0c0;"></div>
<div style="position:absolute;left:395px;top:31px;font-size:11px;line-height:1;color:#000;font-weight:normal;white-space:nowrap;"><div style="width:345px;text-align:right">0.3040</div></div>
<div style="position:absolute;left:741px;top:23px;width:340px;height:25px;background:#ffffff;border-right:1px solid #c0c0c0;border-bottom:1px solid #c0c0c0;"></div>
<div style="position:absolute;left:741px;top:31px;font-size:11px;line-height:1;color:#000;font-weight:normal;white-space:nowrap;"><div style="width:339px;text-align:right">0.2974</div></div>
<div style="position:absolute;left:1081px;top:23px;width:340px;height:25px;background:#ffffff;border-right:1px solid #c0c0c0;border-bottom:1px solid #c0c0c0;"></div>
<div style="position:absolute;left:1081px;top:31px;font-size:11px;line-height:1;color:#000;font-weight:normal;white-space:nowrap;"><div style="width:339px;text-align:right">0.2929</div></div>
<div style="position:absolute;left:1421px;top:23px;width:340px;height:25px;background:#ffffff;border-right:1px solid #c0c0c0;border-bottom:1px solid #c0c0c0;"></div>
<div style="position:absolute;left:1421px;top:31px;font-size:11px;line-height:1;color:#000;font-weight:normal;white-space:nowrap;"><div style="width:339px;text-align:right">0.2881</div></div>
<div style="position:absolute;left:0px;top:48px;width:54px;height:25px;background:#f0f0f0;border-right:1px solid #6a6a6a;border-bottom:1px solid #6a6a6a;border-top:1px solid #fff;"></div>
<div style="position:absolute;left:0px;top:55px;font-size:12px;line-height:1;color:#000;font-weight:bold;white-space:nowrap;"><div style="width:54px;text-align:center">y</div></div>
<div style="position:absolute;left:54px;top:48px;width:341px;height:25px;background:#ffffff;border-right:1px solid #c0c0c0;border-bottom:1px solid #c0c0c0;"></div>
<div style="position:absolute;left:54px;top:56px;font-size:11px;line-height:1;color:#000;font-weight:normal;white-space:nowrap;"><div style="width:340px;text-align:right">0.3326</div></div>
<div style="position:absolute;left:395px;top:48px;width:346px;height:25px;background:#ffffff;border-right:1px solid #c0c0c0;border-bottom:1px solid #c0c0c0;"></div>
<div style="position:absolute;left:395px;top:56px;font-size:11px;line-height:1;color:#000;font-weight:normal;white-space:nowrap;"><div style="width:345px;text-align:right">0.4170</div></div>
<div style="position:absolute;left:741px;top:48px;width:340px;height:25px;background:#ffffff;border-right:1px solid #c0c0c0;border-bottom:1px solid #c0c0c0;"></div>
<div style="position:absolute;left:741px;top:56px;font-size:11px;line-height:1;color:#000;font-weight:normal;white-space:nowrap;"><div style="width:339px;text-align:right">0.5006</div></div>
<div style="position:absolute;left:1081px;top:48px;width:340px;height:25px;background:#ffffff;border-right:1px solid #c0c0c0;border-bottom:1px solid #c0c0c0;"></div>
<div style="position:absolute;left:1081px;top:56px;font-size:11px;line-height:1;color:#000;font-weight:normal;white-space:nowrap;"><div style="width:339px;text-align:right">0.5616</div></div>
<div style="position:absolute;left:1421px;top:48px;width:340px;height:25px;background:#ffffff;border-right:1px solid #c0c0c0;border-bottom:1px solid #c0c0c0;"></div>
<div style="position:absolute;left:1421px;top:56px;font-size:11px;line-height:1;color:#000;font-weight:normal;white-space:nowrap;"><div style="width:339px;text-align:right">0.6169</div></div>
<div style="position:absolute;left:0px;top:73px;width:54px;height:25px;background:#f0f0f0;border-right:1px solid #6a6a6a;border-bottom:1px solid #6a6a6a;border-top:1px solid #fff;"></div>
<div style="position:absolute;left:0px;top:80px;font-size:12px;line-height:1;color:#000;font-weight:bold;white-space:nowrap;"><div style="width:54px;text-align:center">Y</div></div>
<div style="position:absolute;left:54px;top:73px;width:341px;height:25px;background:#ffffff;border-right:1px solid #c0c0c0;border-bottom:1px solid #c0c0c0;"></div>
<div style="position:absolute;left:54px;top:81px;font-size:11px;line-height:1;color:#000;font-weight:normal;white-space:nowrap;"><div style="width:340px;text-align:right">138.643</div></div>
<div style="position:absolute;left:395px;top:73px;width:346px;height:25px;background:#ffffff;border-right:1px solid #c0c0c0;border-bottom:1px solid #c0c0c0;"></div>
<div style="position:absolute;left:395px;top:81px;font-size:11px;line-height:1;color:#000;font-weight:normal;white-space:nowrap;"><div style="width:345px;text-align:right">135.526</div></div>
<div style="position:absolute;left:741px;top:73px;width:340px;height:25px;background:#ffffff;border-right:1px solid #c0c0c0;border-bottom:1px solid #c0c0c0;"></div>
<div style="position:absolute;left:741px;top:81px;font-size:11px;line-height:1;color:#000;font-weight:normal;white-space:nowrap;"><div style="width:339px;text-align:right">136.330</div></div>
<div style="position:absolute;left:1081px;top:73px;width:340px;height:25px;background:#ffffff;border-right:1px solid #c0c0c0;border-bottom:1px solid #c0c0c0;"></div>
<div style="position:absolute;left:1081px;top:81px;font-size:11px;line-height:1;color:#000;font-weight:normal;white-space:nowrap;"><div style="width:339px;text-align:right">139.727</div></div>
<div style="position:absolute;left:1421px;top:73px;width:340px;height:25px;background:#ffffff;border-right:1px solid #c0c0c0;border-bottom:1px solid #c0c0c0;"></div>
<div style="position:absolute;left:1421px;top:81px;font-size:11px;line-height:1;color:#000;font-weight:normal;white-space:nowrap;"><div style="width:339px;text-align:right">139.508</div></div>
<div style="position:absolute;left:0px;top:98px;width:54px;height:25px;background:#f0f0f0;border-right:1px solid #6a6a6a;border-bottom:1px solid #6a6a6a;border-top:1px solid #fff;"></div>
<div style="position:absolute;left:0px;top:105px;font-size:12px;line-height:1;color:#000;font-weight:bold;white-space:nowrap;"><div style="width:54px;text-align:center">Delta E</div></div>
<div style="position:absolute;left:54px;top:98px;width:341px;height:25px;background:#ffaaaa;border-right:1px solid #c0c0c0;border-bottom:1px solid #c0c0c0;"></div>
<div style="position:absolute;left:54px;top:106px;font-size:12px;line-height:1;color:#000;font-weight:bold;white-space:nowrap;"><div style="width:340px;text-align:right">3.8</div></div>
<div style="position:absolute;left:395px;top:98px;width:346px;height:25px;background:#ffffaa;border-right:1px solid #c0c0c0;border-bottom:1px solid #c0c0c0;"></div>
<div style="position:absolute;left:395px;top:106px;font-size:12px;line-height:1;color:#000;font-weight:bold;white-space:nowrap;"><div style="width:345px;text-align:right">2.7</div></div>
<div style="position:absolute;left:741px;top:98px;width:340px;height:25px;background:#ffffaa;border-right:1px solid #c0c0c0;border-bottom:1px solid #c0c0c0;"></div>
<div style="position:absolute;left:741px;top:106px;font-size:12px;line-height:1;color:#000;font-weight:bold;white-space:nowrap;"><div style="width:339px;text-align:right">2.7</div></div>
<div style="position:absolute;left:1081px;top:98px;width:340px;height:25px;background:#aaffaa;border-right:1px solid #c0c0c0;border-bottom:1px solid #c0c0c0;"></div>
<div style="position:absolute;left:1081px;top:106px;font-size:12px;line-height:1;color:#000;font-weight:bold;white-space:nowrap;"><div style="width:339px;text-align:right">1.8</div></div>
<div style="position:absolute;left:1421px;top:98px;width:340px;height:25px;background:#aaffaa;border-right:1px solid #c0c0c0;border-bottom:1px solid #c0c0c0;"></div>
<div style="position:absolute;left:1421px;top:106px;font-size:12px;line-height:1;color:#000;font-weight:bold;white-space:nowrap;"><div style="width:339px;text-align:right">1.6</div></div>
<div style="position:absolute;left:0px;top:123px;width:54px;height:25px;background:#f0f0f0;border-right:1px solid #6a6a6a;border-bottom:1px solid #6a6a6a;border-top:1px solid #fff;"></div>
<div style="position:absolute;left:0px;top:130px;font-size:12px;line-height:1;color:#000;font-weight:bold;white-space:nowrap;"><div style="width:54px;text-align:center">delta xy</div></div>
<div style="position:absolute;left:54px;top:123px;width:341px;height:25px;background:#f0f0f0;border-right:1px solid #c0c0c0;border-bottom:1px solid #c0c0c0;"></div>
<div style="position:absolute;left:54px;top:131px;font-size:11px;line-height:1;color:#000;font-weight:normal;white-space:nowrap;"><div style="width:340px;text-align:right">0.0043</div></div>
<div style="position:absolute;left:395px;top:123px;width:346px;height:25px;background:#f0f0f0;border-right:1px solid #c0c0c0;border-bottom:1px solid #c0c0c0;"></div>
<div style="position:absolute;left:395px;top:131px;font-size:11px;line-height:1;color:#000;font-weight:normal;white-space:nowrap;"><div style="width:345px;text-align:right">0.0150</div></div>
<div style="position:absolute;left:741px;top:123px;width:340px;height:25px;background:#f0f0f0;border-right:1px solid #c0c0c0;border-bottom:1px solid #c0c0c0;"></div>
<div style="position:absolute;left:741px;top:131px;font-size:11px;line-height:1;color:#000;font-weight:normal;white-space:nowrap;"><div style="width:339px;text-align:right">0.0277</div></div>
<div style="position:absolute;left:1081px;top:123px;width:340px;height:25px;background:#f0f0f0;border-right:1px solid #c0c0c0;border-bottom:1px solid #c0c0c0;"></div>
<div style="position:absolute;left:1081px;top:131px;font-size:11px;line-height:1;color:#000;font-weight:normal;white-space:nowrap;"><div style="width:339px;text-align:right">0.0217</div></div>
<div style="position:absolute;left:1421px;top:123px;width:340px;height:25px;background:#f0f0f0;border-right:1px solid #c0c0c0;border-bottom:1px solid #c0c0c0;"></div>
<div style="position:absolute;left:1421px;top:131px;font-size:11px;line-height:1;color:#000;font-weight:normal;white-space:nowrap;"><div style="width:339px;text-align:right">0.0206</div></div>
<div style="position:absolute;left:0px;top:148px;width:54px;height:25px;background:#f0f0f0;border-right:1px solid #6a6a6a;border-bottom:1px solid #6a6a6a;border-top:1px solid #fff;"></div>
<div style="position:absolute;left:0px;top:155px;font-size:12px;line-height:1;color:#000;font-weight:bold;white-space:nowrap;"><div style="width:54px;text-align:center">delta L</div></div>
<div style="position:absolute;left:54px;top:148px;width:341px;height:25px;background:#dfdfdf;border-right:1px solid #c0c0c0;border-bottom:1px solid #c0c0c0;"></div>
<div style="position:absolute;left:54px;top:156px;font-size:11px;line-height:1;color:#000;font-weight:normal;white-space:nowrap;"><div style="width:340px;text-align:right">-0.1 %</div></div>
<div style="position:absolute;left:395px;top:148px;width:346px;height:25px;background:#dfdfdf;border-right:1px solid #c0c0c0;border-bottom:1px solid #c0c0c0;"></div>
<div style="position:absolute;left:395px;top:156px;font-size:11px;line-height:1;color:#000;font-weight:normal;white-space:nowrap;"><div style="width:345px;text-align:right">-3.4 %</div></div>
<div style="position:absolute;left:741px;top:148px;width:340px;height:25px;background:#dfdfdf;border-right:1px solid #c0c0c0;border-bottom:1px solid #c0c0c0;"></div>
<div style="position:absolute;left:741px;top:156px;font-size:11px;line-height:1;color:#000;font-weight:normal;white-space:nowrap;"><div style="width:339px;text-align:right">-3.3 %</div></div>
<div style="position:absolute;left:1081px;top:148px;width:340px;height:25px;background:#dfdfdf;border-right:1px solid #c0c0c0;border-bottom:1px solid #c0c0c0;"></div>
<div style="position:absolute;left:1081px;top:156px;font-size:11px;line-height:1;color:#000;font-weight:normal;white-space:nowrap;"><div style="width:339px;text-align:right">-1.8 %</div></div>
<div style="position:absolute;left:1421px;top:148px;width:340px;height:25px;background:#dfdfdf;border-right:1px solid #c0c0c0;border-bottom:1px solid #c0c0c0;"></div>
<div style="position:absolute;left:1421px;top:156px;font-size:11px;line-height:1;color:#000;font-weight:normal;white-space:nowrap;"><div style="width:339px;text-align:right">-2.6 %</div></div>
<div style="position:absolute;left:0px;top:173px;width:54px;height:25px;background:#f0f0f0;border-right:1px solid #6a6a6a;border-top:1px solid #fff;"></div>
<div style="position:absolute;left:54px;top:173px;width:341px;height:25px;background:#f0f0f0;border-right:1px solid #c0c0c0;"></div>
<div style="position:absolute;left:395px;top:173px;width:346px;height:25px;background:#f0f0f0;border-right:1px solid #c0c0c0;"></div>
<div style="position:absolute;left:741px;top:173px;width:340px;height:25px;background:#f0f0f0;border-right:1px solid #c0c0c0;"></div>
<div style="position:absolute;left:1081px;top:173px;width:340px;height:25px;background:#f0f0f0;border-right:1px solid #c0c0c0;"></div>
<div style="position:absolute;left:1421px;top:173px;width:340px;height:25px;background:#f0f0f0;border-right:1px solid #c0c0c0;"></div>
</div>
<div style="position:absolute;left:1771px;top:178px;width:18px;height:177px;background:#f0f0f0;border-left:1px solid #fff;"></div>
<div style="position:absolute;left:1779px;top:195px;width:2px;height:145px;background:#8a8a8a;"></div>
<div style="position:absolute;left:10px;top:355px;width:1779px;height:18px;background:#f0f0f0;border-top:1px solid #fff;"></div>
<svg style="position:absolute;left:14px;top:359px" width="10" height="10"><path d="M7 1 V9 L2 5 Z" fill="#a0a0a0"/></svg>
<svg style="position:absolute;left:1758px;top:359px" width="10" height="10"><path d="M3 1 V9 L8 5 Z" fill="#a0a0a0"/></svg>
<div style="position:absolute;left:1789px;top:178px;width:17px;height:197px;background:#ececec;"></div>
<div style="position:absolute;left:3px;top:378px;width:1897px;height:2px;background:#fff;"></div>
<div style="position:absolute;left:3px;top:380px;width:1897px;height:4px;background:#717171;"></div>
<div style="position:absolute;left:3px;top:384px;width:1897px;height:3px;background:#fff;"></div>
<div style="position:absolute;left:1808px;top:159px;width:4px;height:225px;background:#717171;"></div>
<div style="position:absolute;left:1815px;top:162px;width:80px;height:98px;background:#ececec;border-top:1px solid #6e6e6e;border-left:2px solid #6e6e6e;border-right:1px solid #a0a0a0;border-bottom:1px solid #8a8a8a;"></div>
<div style="position:absolute;left:1817px;top:163px;width:5px;height:5px;background:#8a8a8a;"></div>
<div style="position:absolute;left:1889px;top:163px;width:5px;height:5px;background:#8a8a8a;"></div>
<div style="position:absolute;left:1817px;top:163px;width:77px;height:17px;background:#e3eaf5;border-top-left-radius:6px;border-top-right-radius:6px;border-bottom:1px solid #a6a6a6;"></div>
<div style="position:absolute;left:1822px;top:166px;font-size:12px;line-height:1;color:#333;font-weight:bold;white-space:nowrap;font-family:'Liberation Sans', sans-serif;letter-spacing:0.9px">Display</div>
<svg style="position:absolute;left:1822px;top:181px" width="14" height="14"><circle cx="6.5" cy="6.5" r="5" fill="#f0f0f0" stroke="#fff" stroke-width="1"/><path d="M2.6 10 A5 5 0 0 1 10 2.6" fill="none" stroke="#b0b0b0" stroke-width="1.4"/></svg>
<div style="position:absolute;left:1841px;top:182px;font-size:13px;line-height:1;color:#a8a8a8;font-weight:normal;white-space:nowrap;font-family:'Liberation Sans', sans-serif;">Sensor</div>
<svg style="position:absolute;left:1822px;top:197px" width="14" height="14"><circle cx="6.5" cy="6.5" r="5" fill="#fff" stroke="#fff" stroke-width="1"/><path d="M2.6 10 A5 5 0 0 1 10 2.6" fill="none" stroke="#555" stroke-width="1.4"/></svg>
<div style="position:absolute;left:1841px;top:198px;font-size:13px;line-height:1;color:#000;font-weight:normal;white-space:nowrap;font-family:'Liberation Sans', sans-serif;">RGB</div>
<svg style="position:absolute;left:1822px;top:213px" width="14" height="14"><circle cx="6.5" cy="6.5" r="5" fill="#fff" stroke="#fff" stroke-width="1"/><path d="M2.6 10 A5 5 0 0 1 10 2.6" fill="none" stroke="#555" stroke-width="1.4"/></svg>
<div style="position:absolute;left:1841px;top:214px;font-size:13px;line-height:1;color:#000;font-weight:normal;white-space:nowrap;font-family:'Liberation Sans', sans-serif;">XYZ</div>
<svg style="position:absolute;left:1822px;top:229px" width="14" height="14"><circle cx="6.5" cy="6.5" r="5" fill="#fff" stroke="#fff" stroke-width="1"/><path d="M2.6 10 A5 5 0 0 1 10 2.6" fill="none" stroke="#555" stroke-width="1.4"/></svg>
<div style="position:absolute;left:1841px;top:230px;font-size:13px;line-height:1;color:#000;font-weight:normal;white-space:nowrap;font-family:'Liberation Sans', sans-serif;">xyz</div>
<svg style="position:absolute;left:1822px;top:244px" width="14" height="14"><circle cx="6.5" cy="6.5" r="5" fill="#fff" stroke="#fff" stroke-width="1"/><path d="M2.6 10 A5 5 0 0 1 10 2.6" fill="none" stroke="#555" stroke-width="1.4"/><circle cx="6.5" cy="6.5" r="2" fill="#000"/></svg>
<div style="position:absolute;left:1841px;top:245px;font-size:13px;line-height:1;color:#000;font-weight:normal;white-space:nowrap;font-family:'Liberation Sans', sans-serif;">xyY</div>
<div style="position:absolute;left:1812px;top:260px;width:84px;height:118px;background:#8a8a8a;"></div>
<div style="position:absolute;left:1812px;top:264px;width:83px;height:30px;background:#ececec;border-bottom:1px solid #a0a0a0;border-top:1px solid #fff;"></div>
<div style="position:absolute;left:1812px;top:294px;width:83px;height:30px;background:#ececec;border-bottom:1px solid #a0a0a0;border-top:1px solid #fff;"></div>
<div style="position:absolute;left:1812px;top:324px;width:83px;height:30px;background:#ececec;border-bottom:2px solid #6e6e6e;border-top:1px solid #fff;"></div>
<div style="position:absolute;left:1861px;top:272px;font-size:14px;line-height:1;color:#000;font-weight:normal;white-space:nowrap;font-family:'Liberation Sans', sans-serif;">Go</div>
<svg style="position:absolute;left:1817px;top:266px" width="34" height="28"><path d="M1 1 H12 L16 26 H1 Z" fill="#b8b8b8" stroke="#222" stroke-width="1"/><path d="M20 1 H33 V26 H22 Z" fill="#b8b8b8" stroke="#222" stroke-width="1"/><path d="M1.5 2 V26 M32.5 2 V26" stroke="#000" stroke-width="2" stroke-dasharray="2,1.5"/><rect x="5" y="6" width="5" height="4" fill="#f0f0f0"/><rect x="5" y="14" width="5" height="4" fill="#f0f0f0"/><rect x="24" y="8" width="5" height="4" fill="#f0f0f0"/><rect x="24" y="16" width="5" height="4" fill="#f0f0f0"/><path d="M7 1 H18 Q15 8 19 14 L27 22 L21 27 H14 L9 18 Q6 10 7 1 Z" fill="#20d850" stroke="#0a4a20" stroke-width="1"/><path d="M11 6 L17 5 M11 12 L18 11 M14 18 L21 16 M17 23 L24 20" stroke="#0a4a20" stroke-width="1.2"/></svg>
<div style="position:absolute;left:1851px;top:302px;font-size:14px;line-height:1;color:#000;font-weight:normal;white-space:nowrap;font-family:'Liberation Sans', sans-serif;">Delete</div>
<svg style="position:absolute;left:1818px;top:295px" width="30" height="28"><path d="M2 4 Q14 0 28 3 L24 25 Q14 28 6 25 Z" fill="#a8d8f8" stroke="#7ab0d8" stroke-width="1"/><ellipse cx="15" cy="4" rx="12" ry="2.5" fill="#d8f0ff" stroke="#5a9ad0" stroke-width="0.8"/><path d="M10 14 A5 5 0 0 1 19 11" fill="none" stroke="#10a020" stroke-width="2.5"/><path d="M20 15 A5 5 0 0 1 11 19" fill="none" stroke="#10a020" stroke-width="2.5"/></svg>
<div style="position:absolute;left:1857px;top:332px;font-size:14px;line-height:1;color:#000;font-weight:normal;white-space:nowrap;font-family:'Liberation Sans', sans-serif;">Refs</div>
<svg style="position:absolute;left:1818px;top:328px" width="34" height="24"><path d="M0 22 V12 L2 11 L5 4 L8 10 L11 11 L13 10 L15 5 L17 2 L20 4 L22 7 L24 9 L27 8 L30 10 V22 Z" fill="#f0f000"/><rect x="0" y="12" width="2" height="10" fill="#0000a0"/><rect x="2" y="12" width="2" height="10" fill="#ff00ff"/><rect x="4" y="7" width="4" height="15" fill="#0000ff"/><rect x="8" y="11" width="3" height="11" fill="#00ffff"/><rect x="11" y="11" width="3" height="11" fill="#00e000"/><rect x="14" y="5" width="5" height="17" fill="#ffff00"/><rect x="19" y="5" width="4" height="17" fill="#800000"/><rect x="23" y="10" width="7" height="12" fill="#ff0000"/></svg>
<div style="position:absolute;left:1818px;top:358px;width:56px;height:18px;background:#ececec;"></div>
<div style="position:absolute;left:1820px;top:360px;width:12px;height:12px;background:#fff;border-top:2px solid #555;border-left:2px solid #555;border-right:1px solid #fff;border-bottom:1px solid #fff;"></div>
<div style="position:absolute;left:1837px;top:360px;font-size:14px;line-height:1;color:#000;font-weight:normal;white-space:nowrap;font-family:'Liberation Sans', sans-serif;">Edit</div>
<div style="position:absolute;left:5px;top:387px;width:378px;height:632px;background:#ececec;border-top:1px solid #6e6e6e;border-left:2px solid #6e6e6e;border-right:1px solid #a0a0a0;border-bottom:1px solid #8a8a8a;"></div>
<div style="position:absolute;left:7px;top:388px;width:5px;height:5px;background:#8a8a8a;"></div>
<div style="position:absolute;left:377px;top:388px;width:5px;height:5px;background:#8a8a8a;"></div>
<div style="position:absolute;left:7px;top:388px;width:375px;height:17px;background:#e3eaf5;border-top-left-radius:6px;border-top-right-radius:6px;border-bottom:1px solid #a6a6a6;"></div>
<div style="position:absolute;left:12px;top:391px;font-size:12px;line-height:1;color:#333;font-weight:bold;white-space:nowrap;font-family:'Liberation Sans', sans-serif;letter-spacing:0.9px">Selected color</div>
<div style="position:absolute;left:381px;top:405px;width:2px;height:610px;background:#a0a0a0;"></div>
<div style="position:absolute;left:5px;top:1014px;width:378px;height:5px;background:#f0f0f0;border-top:1px solid #a0a0a0;border-bottom:2px solid #6e6e6e;"></div>
<div style="position:absolute;left:16px;top:409px;width:112px;height:14px;background:#f0f0f0;"></div>
<div style="position:absolute;left:18px;top:410px;font-size:13px;line-height:1;color:#000;font-weight:normal;white-space:nowrap;font-family:'Liberation Sans', sans-serif;">RGB Levels</div>
<div style="position:absolute;left:230px;top:408px;width:127px;height:14px;background:#f0f0f0;"></div>
<div style="position:absolute;left:241px;top:408px;font-size:14px;line-height:1;color:#000;font-weight:normal;white-space:nowrap;font-family:'Liberation Sans', sans-serif;">Current Measure</div>
<div style="position:absolute;left:14px;top:433px;width:200px;height:86px;background:#f0f0f0;"></div>
<svg style="position:absolute;left:14px;top:433px" width="200" height="90"><line x1="0" y1="44.5" x2="200" y2="44.5" stroke="#808080" stroke-dasharray="3,3"/><path d="M0 82 Q25 70 51 82 Z" fill="#a00000" stroke="#000" stroke-width="1"/><path d="M51 82 Q76 70 102 82 Z" fill="#00a000" stroke="#000" stroke-width="1"/><path d="M102 82 Q127 70 153 82 Z" fill="#0000b0" stroke="#000" stroke-width="1"/><path d="M153 82 Q178 70 204 82 Z" fill="#c08000" stroke="#000" stroke-width="1"/><rect x="0" y="80.5" width="200" height="5" fill="#000"/></svg>
<div style="position:absolute;left:26px;top:495px;font-size:13.3px;line-height:1;color:#000;font-weight:normal;white-space:nowrap;font-family:'Liberation Serif', serif;">0.0%</div>
<div style="position:absolute;left:77px;top:495px;font-size:13.3px;line-height:1;color:#000;font-weight:normal;white-space:nowrap;font-family:'Liberation Serif', serif;">0.0%</div>
<div style="position:absolute;left:128px;top:495px;font-size:13.3px;line-height:1;color:#000;font-weight:normal;white-space:nowrap;font-family:'Liberation Serif', serif;">0.0%</div>
<div style="position:absolute;left:175px;top:495px;font-size:13.3px;line-height:1;color:#000;font-weight:normal;white-space:nowrap;font-family:'Liberation Serif', serif;">dE 0.0</div>
<div style="position:absolute;left:16px;top:533px;width:192px;height:74px;background:#f0f0f0;"></div>
<div style="position:absolute;left:36px;top:535px;font-size:13px;line-height:1;color:#000;font-weight:bold;white-space:nowrap;font-family:'Liberation Sans', sans-serif;letter-spacing:0.3px">Measure</div>
<div style="position:absolute;left:127px;top:535px;font-size:13px;line-height:1;color:#000;font-weight:bold;white-space:nowrap;font-family:'Liberation Sans', sans-serif;letter-spacing:0.3px">Reference</div>
<div style="position:absolute;left:16px;top:622px;width:44px;height:14px;background:#f0f0f0;"></div>
<div style="position:absolute;left:18px;top:622px;font-size:14px;line-height:1;color:#000;font-weight:normal;white-space:nowrap;font-family:'Liberation Sans', sans-serif;">Target</div>
<div style="position:absolute;left:50px;top:638px;width:116px;height:89px;background:conic-gradient(from 0deg, #40ff00 0deg, #c0e000 30deg, #ffa000 50deg, #ff0000 90deg, #ff0090 130deg, #9000c0 180deg, #0000ff 225deg, #0090a8 270deg, #00ff80 315deg, #40ff00 360deg);border:1px solid #000;"></div>
<svg style="position:absolute;left:50px;top:638px" width="116" height="89"><rect x="17.5" y="13.5" width="81" height="62" rx="8" fill="#000" stroke="#fff" stroke-width="1"/><line x1="15" y1="44.5" x2="102" y2="44.5" stroke="#fff" stroke-dasharray="3,3"/><line x1="58.5" y1="13" x2="58.5" y2="76" stroke="#fff" stroke-dasharray="3,3"/><ellipse cx="58.5" cy="44.5" rx="21" ry="15.5" fill="none" stroke="#fff" stroke-dasharray="3,4"/></svg>
<div style="position:absolute;left:220px;top:430px;width:154px;height:579px;background:#f0f0f0;border-top:2px solid #6e6e6e;border-left:2px solid #6e6e6e;"></div>
<div style="position:absolute;left:222px;top:432px;width:53px;height:23px;background:#f0f0f0;border-right:1px solid #6a6a6a;border-bottom:2px solid #6a6a6a;border-top:1px solid #fff;"></div>
<div style="position:absolute;left:222px;top:437px;font-size:12px;line-height:1;color:#000;font-weight:bold;white-space:nowrap;font-family:'Liberation Sans', sans-serif;"><div style="width:53px;text-align:center">Y cd/m<sup style="font-size:8px;vertical-align:5px">2</sup></div></div>
<div style="position:absolute;left:275px;top:432px;width:80px;height:23px;background:#ffffff;border-bottom:1px solid #c0c0c0;"></div>
<div style="position:absolute;left:222px;top:455px;width:53px;height:23px;background:#f0f0f0;border-right:1px solid #6a6a6a;border-bottom:2px solid #6a6a6a;border-top:1px solid #fff;"></div>
<div style="position:absolute;left:222px;top:460px;font-size:12px;line-height:1;color:#000;font-weight:bold;white-space:nowrap;font-family:'Liberation Sans', sans-serif;"><div style="width:53px;text-align:center">Y ftL</div></div>
<div style="position:absolute;left:275px;top:455px;width:80px;height:23px;background:#ffffff;border-bottom:1px solid #c0c0c0;"></div>
<div style="position:absolute;left:222px;top:478px;width:53px;height:23px;background:#f0f0f0;border-right:1px solid #6a6a6a;border-bottom:2px solid #6a6a6a;border-top:1px solid #fff;"></div>
<div style="position:absolute;left:222px;top:483px;font-size:12px;line-height:1;color:#000;font-weight:bold;white-space:nowrap;font-family:'Liberation Sans', sans-serif;"><div style="width:53px;text-align:center">T&deg;</div></div>
<div style="position:absolute;left:275px;top:478px;width:80px;height:23px;background:#ffffff;border-bottom:1px solid #c0c0c0;"></div>
<div style="position:absolute;left:222px;top:501px;width:53px;height:23px;background:#f0f0f0;border-right:1px solid #6a6a6a;border-bottom:2px solid #6a6a6a;border-top:1px solid #fff;"></div>
<div style="position:absolute;left:222px;top:506px;font-size:12px;line-height:1;color:#000;font-weight:bold;white-space:nowrap;font-family:'Liberation Sans', sans-serif;"><div style="width:53px;text-align:center">X</div></div>
<div style="position:absolute;left:275px;top:501px;width:80px;height:23px;background:#dfdfdf;border-bottom:1px solid #c0c0c0;"></div>
<div style="position:absolute;left:222px;top:524px;width:53px;height:23px;background:#f0f0f0;border-right:1px solid #6a6a6a;border-bottom:2px solid #6a6a6a;border-top:1px solid #fff;"></div>
<div style="position:absolute;left:222px;top:529px;font-size:12px;line-height:1;color:#000;font-weight:bold;white-space:nowrap;font-family:'Liberation Sans', sans-serif;"><div style="width:53px;text-align:center">Y</div></div>
<div style="position:absolute;left:275px;top:524px;width:80px;height:23px;background:#dfdfdf;border-bottom:1px solid #c0c0c0;"></div>
<div style="position:absolute;left:222px;top:547px;width:53px;height:23px;background:#f0f0f0;border-right:1px solid #6a6a6a;border-bottom:2px solid #6a6a6a;border-top:1px solid #fff;"></div>
<div style="position:absolute;left:222px;top:552px;font-size:12px;line-height:1;color:#000;font-weight:bold;white-space:nowrap;font-family:'Liberation Sans', sans-serif;"><div style="width:53px;text-align:center">Z</div></div>
<div style="position:absolute;left:275px;top:547px;width:80px;height:23px;background:#dfdfdf;border-bottom:1px solid #c0c0c0;"></div>
<div style="position:absolute;left:222px;top:570px;width:53px;height:23px;background:#f0f0f0;border-right:1px solid #6a6a6a;border-bottom:2px solid #6a6a6a;border-top:1px solid #fff;"></div>
<div style="position:absolute;left:222px;top:575px;font-size:12px;line-height:1;color:#000;font-weight:bold;white-space:nowrap;font-family:'Liberation Sans', sans-serif;"><div style="width:53px;text-align:center">R</div></div>
<div style="position:absolute;left:275px;top:570px;width:80px;height:23px;background:#ffffff;border-bottom:1px solid #c0c0c0;"></div>
<div style="position:absolute;left:222px;top:593px;width:53px;height:23px;background:#f0f0f0;border-right:1px solid #6a6a6a;border-bottom:2px solid #6a6a6a;border-top:1px solid #fff;"></div>
<div style="position:absolute;left:222px;top:598px;font-size:12px;line-height:1;color:#000;font-weight:bold;white-space:nowrap;font-family:'Liberation Sans', sans-serif;"><div style="width:53px;text-align:center">G</div></div>
<div style="position:absolute;left:275px;top:593px;width:80px;height:23px;background:#ffffff;border-bottom:1px solid #c0c0c0;"></div>
<div style="position:absolute;left:222px;top:616px;width:53px;height:23px;background:#f0f0f0;border-right:1px solid #6a6a6a;border-bottom:2px solid #6a6a6a;border-top:1px solid #fff;"></div>
<div style="position:absolute;left:222px;top:621px;font-size:12px;line-height:1;color:#000;font-weight:bold;white-space:nowrap;font-family:'Liberation Sans', sans-serif;"><div style="width:53px;text-align:center">B</div></div>
<div style="position:absolute;left:275px;top:616px;width:80px;height:23px;background:#ffffff;border-bottom:1px solid #c0c0c0;"></div>
<div style="position:absolute;left:222px;top:639px;width:53px;height:23px;background:#f0f0f0;border-right:1px solid #6a6a6a;border-bottom:2px solid #6a6a6a;border-top:1px solid #fff;"></div>
<div style="position:absolute;left:222px;top:644px;font-size:12px;line-height:1;color:#000;font-weight:bold;white-space:nowrap;font-family:'Liberation Sans', sans-serif;"><div style="width:53px;text-align:center">x</div></div>
<div style="position:absolute;left:275px;top:639px;width:80px;height:23px;background:#dfdfdf;border-bottom:1px solid #c0c0c0;"></div>
<div style="position:absolute;left:222px;top:662px;width:53px;height:23px;background:#f0f0f0;border-right:1px solid #6a6a6a;border-bottom:2px solid #6a6a6a;border-top:1px solid #fff;"></div>
<div style="position:absolute;left:222px;top:667px;font-size:12px;line-height:1;color:#000;font-weight:bold;white-space:nowrap;font-family:'Liberation Sans', sans-serif;"><div style="width:53px;text-align:center">y</div></div>
<div style="position:absolute;left:275px;top:662px;width:80px;height:23px;background:#dfdfdf;border-bottom:1px solid #c0c0c0;"></div>
<div style="position:absolute;left:222px;top:685px;width:53px;height:23px;background:#f0f0f0;border-right:1px solid #6a6a6a;border-bottom:2px solid #6a6a6a;border-top:1px solid #fff;"></div>
<div style="position:absolute;left:222px;top:690px;font-size:12px;line-height:1;color:#000;font-weight:bold;white-space:nowrap;font-family:'Liberation Sans', sans-serif;"><div style="width:53px;text-align:center">Y</div></div>
<div style="position:absolute;left:275px;top:685px;width:80px;height:23px;background:#dfdfdf;border-bottom:1px solid #c0c0c0;"></div>
<div style="position:absolute;left:222px;top:708px;width:53px;height:23px;background:#f0f0f0;border-right:1px solid #6a6a6a;border-bottom:2px solid #6a6a6a;border-top:1px solid #fff;"></div>
<div style="position:absolute;left:222px;top:713px;font-size:12px;line-height:1;color:#000;font-weight:bold;white-space:nowrap;font-family:'Liberation Sans', sans-serif;"><div style="width:53px;text-align:center">x</div></div>
<div style="position:absolute;left:275px;top:708px;width:80px;height:23px;background:#ffffff;border-bottom:1px solid #c0c0c0;"></div>
<div style="position:absolute;left:222px;top:731px;width:53px;height:23px;background:#f0f0f0;border-right:1px solid #6a6a6a;border-bottom:2px solid #6a6a6a;border-top:1px solid #fff;"></div>
<div style="position:absolute;left:222px;top:736px;font-size:12px;line-height:1;color:#000;font-weight:bold;white-space:nowrap;font-family:'Liberation Sans', sans-serif;"><div style="width:53px;text-align:center">y</div></div>
<div style="position:absolute;left:275px;top:731px;width:80px;height:23px;background:#ffffff;border-bottom:1px solid #c0c0c0;"></div>
<div style="position:absolute;left:222px;top:754px;width:53px;height:23px;background:#f0f0f0;border-right:1px solid #6a6a6a;border-bottom:2px solid #6a6a6a;border-top:1px solid #fff;"></div>
<div style="position:absolute;left:222px;top:759px;font-size:12px;line-height:1;color:#000;font-weight:bold;white-space:nowrap;font-family:'Liberation Sans', sans-serif;"><div style="width:53px;text-align:center">z</div></div>
<div style="position:absolute;left:275px;top:754px;width:80px;height:23px;background:#ffffff;border-bottom:1px solid #c0c0c0;"></div>
<div style="position:absolute;left:222px;top:777px;width:53px;height:23px;background:#f0f0f0;border-right:1px solid #6a6a6a;border-bottom:2px solid #6a6a6a;border-top:1px solid #fff;"></div>
<div style="position:absolute;left:222px;top:782px;font-size:12px;line-height:1;color:#000;font-weight:bold;white-space:nowrap;font-family:'Liberation Sans', sans-serif;"><div style="width:53px;text-align:center">L</div></div>
<div style="position:absolute;left:275px;top:777px;width:80px;height:23px;background:#dfdfdf;border-bottom:1px solid #c0c0c0;"></div>
<div style="position:absolute;left:222px;top:800px;width:53px;height:23px;background:#f0f0f0;border-right:1px solid #6a6a6a;border-bottom:2px solid #6a6a6a;border-top:1px solid #fff;"></div>
<div style="position:absolute;left:222px;top:805px;font-size:12px;line-height:1;color:#000;font-weight:bold;white-space:nowrap;font-family:'Liberation Sans', sans-serif;"><div style="width:53px;text-align:center">a</div></div>
<div style="position:absolute;left:275px;top:800px;width:80px;height:23px;background:#dfdfdf;border-bottom:1px solid #c0c0c0;"></div>
<div style="position:absolute;left:222px;top:823px;width:53px;height:23px;background:#f0f0f0;border-right:1px solid #6a6a6a;border-bottom:2px solid #6a6a6a;border-top:1px solid #fff;"></div>
<div style="position:absolute;left:222px;top:828px;font-size:12px;line-height:1;color:#000;font-weight:bold;white-space:nowrap;font-family:'Liberation Sans', sans-serif;"><div style="width:53px;text-align:center">b</div></div>
<div style="position:absolute;left:275px;top:823px;width:80px;height:23px;background:#dfdfdf;border-bottom:1px solid #c0c0c0;"></div>
<div style="position:absolute;left:222px;top:846px;width:53px;height:23px;background:#f0f0f0;border-right:1px solid #6a6a6a;border-bottom:2px solid #6a6a6a;border-top:1px solid #fff;"></div>
<div style="position:absolute;left:222px;top:851px;font-size:12px;line-height:1;color:#000;font-weight:bold;white-space:nowrap;font-family:'Liberation Sans', sans-serif;"><div style="width:53px;text-align:center">L</div></div>
<div style="position:absolute;left:275px;top:846px;width:80px;height:23px;background:#ffffff;border-bottom:1px solid #c0c0c0;"></div>
<div style="position:absolute;left:222px;top:869px;width:53px;height:23px;background:#f0f0f0;border-right:1px solid #6a6a6a;border-bottom:2px solid #6a6a6a;border-top:1px solid #fff;"></div>
<div style="position:absolute;left:222px;top:874px;font-size:12px;line-height:1;color:#000;font-weight:bold;white-space:nowrap;font-family:'Liberation Sans', sans-serif;"><div style="width:53px;text-align:center">C</div></div>
<div style="position:absolute;left:275px;top:869px;width:80px;height:23px;background:#ffffff;border-bottom:1px solid #c0c0c0;"></div>
<div style="position:absolute;left:222px;top:892px;width:53px;height:23px;background:#f0f0f0;border-right:1px solid #6a6a6a;border-bottom:2px solid #6a6a6a;border-top:1px solid #fff;"></div>
<div style="position:absolute;left:222px;top:897px;font-size:12px;line-height:1;color:#000;font-weight:bold;white-space:nowrap;font-family:'Liberation Sans', sans-serif;"><div style="width:53px;text-align:center">H</div></div>
<div style="position:absolute;left:275px;top:892px;width:80px;height:23px;background:#ffffff;border-bottom:1px solid #c0c0c0;"></div>
<div style="position:absolute;left:222px;top:915px;width:53px;height:23px;background:#f0f0f0;border-right:1px solid #6a6a6a;border-bottom:2px solid #6a6a6a;border-top:1px solid #fff;"></div>
<div style="position:absolute;left:222px;top:920px;font-size:12px;line-height:1;color:#000;font-weight:bold;white-space:nowrap;font-family:'Liberation Sans', sans-serif;"><div style="width:53px;text-align:center">L</div></div>
<div style="position:absolute;left:275px;top:915px;width:80px;height:23px;background:#dfdfdf;border-bottom:1px solid #c0c0c0;"></div>
<div style="position:absolute;left:222px;top:938px;width:53px;height:23px;background:#f0f0f0;border-right:1px solid #6a6a6a;border-bottom:2px solid #6a6a6a;border-top:1px solid #fff;"></div>
<div style="position:absolute;left:222px;top:943px;font-size:12px;line-height:1;color:#000;font-weight:bold;white-space:nowrap;font-family:'Liberation Sans', sans-serif;"><div style="width:53px;text-align:center">M</div></div>
<div style="position:absolute;left:275px;top:938px;width:80px;height:23px;background:#dfdfdf;border-bottom:1px solid #c0c0c0;"></div>
<div style="position:absolute;left:222px;top:961px;width:53px;height:23px;background:#f0f0f0;border-right:1px solid #6a6a6a;border-bottom:2px solid #6a6a6a;border-top:1px solid #fff;"></div>
<div style="position:absolute;left:222px;top:966px;font-size:12px;line-height:1;color:#000;font-weight:bold;white-space:nowrap;font-family:'Liberation Sans', sans-serif;"><div style="width:53px;text-align:center">S</div></div>
<div style="position:absolute;left:275px;top:961px;width:80px;height:23px;background:#dfdfdf;border-bottom:1px solid #c0c0c0;"></div>
<div style="position:absolute;left:222px;top:984px;width:133px;height:23px;background:#a0a0a0;"></div>
<div style="position:absolute;left:355px;top:432px;width:18px;height:576px;background:#f0f0f0;border-left:1px solid #fff;border-right:1px solid #fff;"></div>
<svg style="position:absolute;left:358px;top:436px" width="12" height="10"><path d="M2 7 H10 L6 2 Z" fill="#a0a0a0"/></svg>
<svg style="position:absolute;left:358px;top:993px" width="12" height="10"><path d="M2 2 H10 L6 7 Z" fill="#a0a0a0"/></svg>
<div style="position:absolute;left:383px;top:384px;width:8px;height:638px;background:#fff;"></div>
<div style="position:absolute;left:384px;top:384px;width:4px;height:6px;background:#747474;"></div>
<div style="position:absolute;left:384px;top:390px;width:2px;height:630px;background:#8a8a8a;"></div>
<div style="position:absolute;left:391px;top:387px;width:1505px;height:632px;background:#ececec;border-top:1px solid #6e6e6e;border-left:2px solid #6e6e6e;border-right:1px solid #a0a0a0;border-bottom:1px solid #8a8a8a;"></div>
<div style="position:absolute;left:393px;top:388px;width:5px;height:5px;background:#8a8a8a;"></div>
<div style="position:absolute;left:1890px;top:388px;width:5px;height:5px;background:#8a8a8a;"></div>
<div style="position:absolute;left:393px;top:388px;width:1502px;height:17px;background:#e3eaf5;border-top-left-radius:6px;border-top-right-radius:6px;border-bottom:1px solid #a6a6a6;"></div>
<div style="position:absolute;left:398px;top:391px;font-size:12px;line-height:1;color:#333;font-weight:bold;white-space:nowrap;font-family:'Liberation Sans', sans-serif;letter-spacing:0.9px">Information</div>
<div style="position:absolute;left:397px;top:409px;width:300px;height:24px;background:#fff;border-top:2px solid #6e6e6e;border-left:2px solid #6e6e6e;border-bottom:1px solid #f8f8f8;border-right:1px solid #f8f8f8;"></div>
<div style="position:absolute;left:400px;top:413px;width:280px;height:16px;background:#0078d7;"></div>
<div style="position:absolute;left:401px;top:414px;font-size:13px;line-height:1;color:#fff;font-weight:normal;white-space:nowrap;font-family:'Liberation Sans', sans-serif;">RGB - Gamma</div>
<div style="position:absolute;left:680px;top:412px;width:16px;height:19px;background:#f0f0f0;border-right:2px solid #6e6e6e;border-bottom:2px solid #6e6e6e;border-top:1px solid #fff;border-left:1px solid #fff;"></div>
<svg style="position:absolute;left:682px;top:418px" width="12" height="6"><path d="M2 0 H10 L6 4 Z" fill="#000"/></svg>
<div style="position:absolute;left:1894px;top:405px;width:2px;height:610px;background:#a0a0a0;"></div>
<div style="position:absolute;left:391px;top:1014px;width:1505px;height:5px;background:#f0f0f0;border-top:1px solid #a0a0a0;border-bottom:2px solid #6e6e6e;"></div>
<div style="position:absolute;left:1896px;top:94px;width:5px;height:926px;background:#747474;"></div>
<div style="position:absolute;left:1901px;top:92px;width:19px;height:930px;background:#f0f0f0;border-left:1px solid #fff;border-right:1px solid #e0e0e0;"></div>
<div style="position:absolute;left:1909px;top:109px;width:2px;height:869px;background:#888;"></div>
<div style="position:absolute;left:398px;top:439px;width:748px;height:570px;background:#f0f0f0;border-top:4px solid #7a7a7a;border-left:4px solid #7a7a7a;border-right:3px solid #fff;border-bottom:3px solid #fff;"></div>
<svg style="position:absolute;left:402px;top:443px;overflow:hidden" width="740" height="562" viewBox="402 443 740 562"><defs><linearGradient id="g1" x1="0" y1="0" x2="1" y2="0"><stop offset="0" stop-color="#202020"/><stop offset="1" stop-color="#fdfdfd"/></linearGradient></defs><rect x="402" y="443" width="740" height="562" fill="url(#g1)"/><line x1="402.5" y1="443" x2="402.5" y2="1005" stroke="#004040" stroke-width="1"/><line x1="476.5" y1="443" x2="476.5" y2="1005" stroke="#004040" stroke-width="1"/><line x1="550.5" y1="443" x2="550.5" y2="1005" stroke="#004040" stroke-width="1"/><line x1="624.5" y1="443" x2="624.5" y2="1005" stroke="#004040" stroke-width="1"/><line x1="698.5" y1="443" x2="698.5" y2="1005" stroke="#004040" stroke-width="1"/><line x1="772.5" y1="443" x2="772.5" y2="1005" stroke="#004040" stroke-width="1"/><line x1="846.5" y1="443" x2="846.5" y2="1005" stroke="#004040" stroke-width="1"/><line x1="920.5" y1="443" x2="920.5" y2="1005" stroke="#004040" stroke-width="1"/><line x1="994.5" y1="443" x2="994.5" y2="1005" stroke="#004040" stroke-width="1"/><line x1="1068.5" y1="443" x2="1068.5" y2="1005" stroke="#004040" stroke-width="1"/><line x1="402" y1="471.5" x2="1142" y2="471.5" stroke="#004040" stroke-width="1"/><line x1="402" y1="499.5" x2="1142" y2="499.5" stroke="#004040" stroke-width="1"/><line x1="402" y1="527.5" x2="1142" y2="527.5" stroke="#004040" stroke-width="1"/><line x1="402" y1="555.5" x2="1142" y2="555.5" stroke="#004040" stroke-width="1"/><line x1="402" y1="611.5" x2="1142" y2="611.5" stroke="#004040" stroke-width="1"/><line x1="402" y1="639.5" x2="1142" y2="639.5" stroke="#004040" stroke-width="1"/><line x1="402" y1="667.5" x2="1142" y2="667.5" stroke="#004040" stroke-width="1"/><line x1="402" y1="695.5" x2="1142" y2="695.5" stroke="#004040" stroke-width="1"/><line x1="402" y1="780.5" x2="1142" y2="780.5" stroke="#004040" stroke-width="1"/><line x1="402" y1="836.5" x2="1142" y2="836.5" stroke="#004040" stroke-width="1"/><line x1="402" y1="892.5" x2="1142" y2="892.5" stroke="#004040" stroke-width="1"/><line x1="402" y1="948.5" x2="1142" y2="948.5" stroke="#004040" stroke-width="1"/><line x1="402" y1="583.5" x2="1142" y2="583.5" stroke="#003838" stroke-width="1"/><line x1="402" y1="583.5" x2="1142" y2="583.5" stroke="#fff" stroke-width="1" stroke-dasharray="4,3"/><rect x="402" y="579" width="5" height="9" fill="#e8e8e8"/><text x="404" y="467" font-family="Liberation Serif" font-size="13.7" fill="#fff" style="mix-blend-mode:difference">140%</text><text x="404" y="495" font-family="Liberation Serif" font-size="13.7" fill="#fff" style="mix-blend-mode:difference">130%</text><text x="404" y="523" font-family="Liberation Serif" font-size="13.7" fill="#fff" style="mix-blend-mode:difference">120%</text><text x="404" y="551" font-family="Liberation Serif" font-size="13.7" fill="#fff" style="mix-blend-mode:difference">110%</text><text x="404" y="579" font-family="Liberation Serif" font-size="13.7" fill="#fff" style="mix-blend-mode:difference">100%</text><text x="404" y="607" font-family="Liberation Serif" font-size="13.7" fill="#fff" style="mix-blend-mode:difference">90%</text><text x="404" y="635" font-family="Liberation Serif" font-size="13.7" fill="#fff" style="mix-blend-mode:difference">80%</text><text x="404" y="663" font-family="Liberation Serif" font-size="13.7" fill="#fff" style="mix-blend-mode:difference">70%</text><text x="404" y="691" font-family="Liberation Serif" font-size="13.7" fill="#fff" style="mix-blend-mode:difference">60%</text><text x="405" y="776" font-family="Liberation Serif" font-size="13.7" fill="#fff" style="mix-blend-mode:difference">8</text><text x="405" y="832" font-family="Liberation Serif" font-size="13.7" fill="#fff" style="mix-blend-mode:difference">6</text><text x="405" y="888" font-family="Liberation Serif" font-size="13.7" fill="#fff" style="mix-blend-mode:difference">4</text><text x="405" y="944" font-family="Liberation Serif" font-size="13.7" fill="#fff" style="mix-blend-mode:difference">2</text><text x="478" y="720" font-family="Liberation Serif" font-size="13.7" fill="rgb(230,230,230)">10% White</text><text x="478" y="1001" font-family="Liberation Serif" font-size="13.7" fill="rgb(230,230,230)">10% White</text><text x="552" y="720" font-family="Liberation Serif" font-size="13.7" fill="rgb(204,204,204)">20% White</text><text x="552" y="1001" font-family="Liberation Serif" font-size="13.7" fill="rgb(204,204,204)">20% White</text><text x="626" y="720" font-family="Liberation Serif" font-size="13.7" fill="rgb(178,178,178)">30% White</text><text x="626" y="1001" font-family="Liberation Serif" font-size="13.7" fill="rgb(178,178,178)">30% White</text><text x="700" y="720" font-family="Liberation Serif" font-size="13.7" fill="rgb(153,153,153)">40% White</text><text x="700" y="1001" font-family="Liberation Serif" font-size="13.7" fill="rgb(153,153,153)">40% White</text><text x="774" y="720" font-family="Liberation Serif" font-size="13.7" fill="rgb(128,128,128)">50% White</text><text x="774" y="1001" font-family="Liberation Serif" font-size="13.7" fill="rgb(128,128,128)">50% White</text><text x="848" y="720" font-family="Liberation Serif" font-size="13.7" fill="rgb(102,102,102)">60% White</text><text x="848" y="1001" font-family="Liberation Serif" font-size="13.7" fill="rgb(102,102,102)">60% White</text><text x="922" y="720" font-family="Liberation Serif" font-size="13.7" fill="rgb(77,77,77)">70% White</text><text x="922" y="1001" font-family="Liberation Serif" font-size="13.7" fill="rgb(77,77,77)">70% White</text><text x="996" y="720" font-family="Liberation Serif" font-size="13.7" fill="rgb(51,51,51)">80% White</text><text x="996" y="1001" font-family="Liberation Serif" font-size="13.7" fill="rgb(51,51,51)">80% White</text><text x="1070" y="720" font-family="Liberation Serif" font-size="13.7" fill="rgb(25,25,25)">90% White</text><text x="1070" y="1001" font-family="Liberation Serif" font-size="13.7" fill="rgb(25,25,25)">90% White</text><path d="M434.8,586 L471.8,623 L510,614 L547,594.5 L584,605 L621,602.5 L658,598.2 L695,596.5 L732,590.8 L769.5,588.7 L807,584.8 L844,584.8 L880.8,581.9 L917.8,580.8 L955.5,580.8 L992.8,577.8 L1029.9,578.9 L1066.9,578.9 L1103.9,577.8 L1140.2,577.8" fill="none" stroke="#00ff00" stroke-width="2"/><rect x="430.8" y="582.0" width="8" height="8" fill="#00ff00"/><rect x="467.8" y="619.0" width="8" height="8" fill="#00ff00"/><rect x="506.0" y="610.0" width="8" height="8" fill="#00ff00"/><rect x="543.0" y="590.5" width="8" height="8" fill="#00ff00"/><rect x="580.0" y="601.0" width="8" height="8" fill="#00ff00"/><rect x="617.0" y="598.5" width="8" height="8" fill="#00ff00"/><rect x="654.0" y="594.2" width="8" height="8" fill="#00ff00"/><rect x="691.0" y="592.5" width="8" height="8" fill="#00ff00"/><rect x="728.0" y="586.8" width="8" height="8" fill="#00ff00"/><rect x="765.5" y="584.7" width="8" height="8" fill="#00ff00"/><rect x="803.0" y="580.8" width="8" height="8" fill="#00ff00"/><rect x="840.0" y="580.8" width="8" height="8" fill="#00ff00"/><rect x="876.8" y="577.9" width="8" height="8" fill="#00ff00"/><rect x="913.8" y="576.8" width="8" height="8" fill="#00ff00"/><rect x="951.5" y="576.8" width="8" height="8" fill="#00ff00"/><rect x="988.8" y="573.8" width="8" height="8" fill="#00ff00"/><rect x="1025.9" y="574.9" width="8" height="8" fill="#00ff00"/><rect x="1062.9" y="574.9" width="8" height="8" fill="#00ff00"/><rect x="1099.9" y="573.8" width="8" height="8" fill="#00ff00"/><rect x="1136.2" y="573.8" width="8" height="8" fill="#00ff00"/><path d="M434.8,492 L471.8,619.6 L510,615.7 L547,594.6 L584,615.7 L621,606.7 L658,604.9 L695,603.8 L732,598.6 L769.5,596.8 L807,593.8 L844,593.8 L880.8,591.7 L917.8,591.7 L955.5,589.9 L992.8,587.6 L1029.9,587.6 L1066.9,588.7 L1103.9,587.6 L1140.2,585.7" fill="none" stroke="#0000ff" stroke-width="2"/><rect x="430.8" y="488.0" width="8" height="8" fill="#0000ff"/><rect x="467.8" y="615.6" width="8" height="8" fill="#0000ff"/><rect x="506.0" y="611.7" width="8" height="8" fill="#0000ff"/><rect x="543.0" y="590.6" width="8" height="8" fill="#0000ff"/><rect x="580.0" y="611.7" width="8" height="8" fill="#0000ff"/><rect x="617.0" y="602.7" width="8" height="8" fill="#0000ff"/><rect x="654.0" y="600.9" width="8" height="8" fill="#0000ff"/><rect x="691.0" y="599.8" width="8" height="8" fill="#0000ff"/><rect x="728.0" y="594.6" width="8" height="8" fill="#0000ff"/><rect x="765.5" y="592.8" width="8" height="8" fill="#0000ff"/><rect x="803.0" y="589.8" width="8" height="8" fill="#0000ff"/><rect x="840.0" y="589.8" width="8" height="8" fill="#0000ff"/><rect x="876.8" y="587.7" width="8" height="8" fill="#0000ff"/><rect x="913.8" y="587.7" width="8" height="8" fill="#0000ff"/><rect x="951.5" y="585.9" width="8" height="8" fill="#0000ff"/><rect x="988.8" y="583.6" width="8" height="8" fill="#0000ff"/><rect x="1025.9" y="583.6" width="8" height="8" fill="#0000ff"/><rect x="1062.9" y="584.7" width="8" height="8" fill="#0000ff"/><rect x="1099.9" y="583.6" width="8" height="8" fill="#0000ff"/><rect x="1136.2" y="581.7" width="8" height="8" fill="#0000ff"/><path d="M434.8,606.9 L471.8,637.7 L510,637 L547,607.8 L584,628.4 L621,623.7 L658,616.9 L695,614.8 L732,609.9 L769.5,608.9 L807,603.8 L844,603.8 L880.8,599.7 L917.8,599.7 L955.5,599 L992.8,595.6 L1029.9,595.6 L1066.9,596.7 L1103.9,596.7 L1140.2,599" fill="none" stroke="#ff0000" stroke-width="2"/><rect x="430.8" y="602.9" width="8" height="8" fill="#ff0000"/><rect x="467.8" y="633.7" width="8" height="8" fill="#ff0000"/><rect x="506.0" y="633.0" width="8" height="8" fill="#ff0000"/><rect x="543.0" y="603.8" width="8" height="8" fill="#ff0000"/><rect x="580.0" y="624.4" width="8" height="8" fill="#ff0000"/><rect x="617.0" y="619.7" width="8" height="8" fill="#ff0000"/><rect x="654.0" y="612.9" width="8" height="8" fill="#ff0000"/><rect x="691.0" y="610.8" width="8" height="8" fill="#ff0000"/><rect x="728.0" y="605.9" width="8" height="8" fill="#ff0000"/><rect x="765.5" y="604.9" width="8" height="8" fill="#ff0000"/><rect x="803.0" y="599.8" width="8" height="8" fill="#ff0000"/><rect x="840.0" y="599.8" width="8" height="8" fill="#ff0000"/><rect x="876.8" y="595.7" width="8" height="8" fill="#ff0000"/><rect x="913.8" y="595.7" width="8" height="8" fill="#ff0000"/><rect x="951.5" y="595.0" width="8" height="8" fill="#ff0000"/><rect x="988.8" y="591.6" width="8" height="8" fill="#ff0000"/><rect x="1025.9" y="591.6" width="8" height="8" fill="#ff0000"/><rect x="1062.9" y="592.7" width="8" height="8" fill="#ff0000"/><rect x="1099.9" y="592.7" width="8" height="8" fill="#ff0000"/><rect x="1136.2" y="595.0" width="8" height="8" fill="#ff0000"/><path d="M434.8,995.8 L471.8,993.4 L510,969.7 L547,983 L584,943.6 L621,952 L658,944.8 L695,938.9 L732,932 L769.5,926.4 L807,924.7 L844,918.7 L880.8,914.9 L917.8,906.9 L955.5,909 L992.8,902.4 L1029.9,903 L1066.9,894.7 L1103.9,885.2 L1140.2,879" fill="none" stroke="#ff00ff" stroke-width="2"/><rect x="430.8" y="991.8" width="8" height="8" fill="#ff00ff"/><rect x="467.8" y="989.4" width="8" height="8" fill="#ff00ff"/><rect x="506.0" y="965.7" width="8" height="8" fill="#ff00ff"/><rect x="543.0" y="979.0" width="8" height="8" fill="#ff00ff"/><rect x="580.0" y="939.6" width="8" height="8" fill="#ff00ff"/><rect x="617.0" y="948.0" width="8" height="8" fill="#ff00ff"/><rect x="654.0" y="940.8" width="8" height="8" fill="#ff00ff"/><rect x="691.0" y="934.9" width="8" height="8" fill="#ff00ff"/><rect x="728.0" y="928.0" width="8" height="8" fill="#ff00ff"/><rect x="765.5" y="922.4" width="8" height="8" fill="#ff00ff"/><rect x="803.0" y="920.7" width="8" height="8" fill="#ff00ff"/><rect x="840.0" y="914.7" width="8" height="8" fill="#ff00ff"/><rect x="876.8" y="910.9" width="8" height="8" fill="#ff00ff"/><rect x="913.8" y="902.9" width="8" height="8" fill="#ff00ff"/><rect x="951.5" y="905.0" width="8" height="8" fill="#ff00ff"/><rect x="988.8" y="898.4" width="8" height="8" fill="#ff00ff"/><rect x="1025.9" y="899.0" width="8" height="8" fill="#ff00ff"/><rect x="1062.9" y="890.7" width="8" height="8" fill="#ff00ff"/><rect x="1099.9" y="881.2" width="8" height="8" fill="#ff00ff"/><rect x="1136.2" y="875.0" width="8" height="8" fill="#ff00ff"/><text x="681" y="457" font-family="Liberation Sans" font-weight="bold" font-size="14.5" fill="#d8d800">Gray Scale Balance w/gamma</text><text x="977" y="963" font-family="Liberation Sans" font-weight="bold" font-size="16" fill="#999">hcfr.sourceforge.net</text></svg>
<div style="position:absolute;left:1146px;top:439px;width:748px;height:570px;background:#f0f0f0;border-top:4px solid #7a7a7a;border-left:4px solid #7a7a7a;border-right:3px solid #fff;border-bottom:3px solid #fff;"></div>
<svg style="position:absolute;left:1150px;top:443px;overflow:hidden" width="740" height="562" viewBox="1150 443 740 562"><defs><linearGradient id="g2" x1="0" y1="0" x2="1" y2="0"><stop offset="0" stop-color="#202020"/><stop offset="1" stop-color="#fdfdfd"/></linearGradient></defs><rect x="1150" y="443" width="740" height="562" fill="url(#g2)"/><line x1="1150.5" y1="443" x2="1150.5" y2="1005" stroke="#004040" stroke-width="1"/><line x1="1224.5" y1="443" x2="1224.5" y2="1005" stroke="#004040" stroke-width="1"/><line x1="1298.5" y1="443" x2="1298.5" y2="1005" stroke="#004040" stroke-width="1"/><line x1="1372.5" y1="443" x2="1372.5" y2="1005" stroke="#004040" stroke-width="1"/><line x1="1446.5" y1="443" x2="1446.5" y2="1005" stroke="#004040" stroke-width="1"/><line x1="1520.5" y1="443" x2="1520.5" y2="1005" stroke="#004040" stroke-width="1"/><line x1="1594.5" y1="443" x2="1594.5" y2="1005" stroke="#004040" stroke-width="1"/><line x1="1668.5" y1="443" x2="1668.5" y2="1005" stroke="#004040" stroke-width="1"/><line x1="1742.5" y1="443" x2="1742.5" y2="1005" stroke="#004040" stroke-width="1"/><line x1="1816.5" y1="443" x2="1816.5" y2="1005" stroke="#004040" stroke-width="1"/><line x1="1150" y1="471.5" x2="1890" y2="471.5" stroke="#004040" stroke-width="1"/><line x1="1150" y1="499.5" x2="1890" y2="499.5" stroke="#004040" stroke-width="1"/><line x1="1150" y1="527.5" x2="1890" y2="527.5" stroke="#004040" stroke-width="1"/><line x1="1150" y1="555.5" x2="1890" y2="555.5" stroke="#004040" stroke-width="1"/><line x1="1150" y1="583.5" x2="1890" y2="583.5" stroke="#004040" stroke-width="1"/><line x1="1150" y1="611.5" x2="1890" y2="611.5" stroke="#004040" stroke-width="1"/><line x1="1150" y1="639.5" x2="1890" y2="639.5" stroke="#004040" stroke-width="1"/><line x1="1150" y1="667.5" x2="1890" y2="667.5" stroke="#004040" stroke-width="1"/><line x1="1150" y1="695.5" x2="1890" y2="695.5" stroke="#004040" stroke-width="1"/><line x1="1150" y1="723.5" x2="1890" y2="723.5" stroke="#004040" stroke-width="1"/><line x1="1150" y1="751.5" x2="1890" y2="751.5" stroke="#004040" stroke-width="1"/><line x1="1150" y1="779.5" x2="1890" y2="779.5" stroke="#004040" stroke-width="1"/><line x1="1150" y1="807.5" x2="1890" y2="807.5" stroke="#004040" stroke-width="1"/><line x1="1150" y1="835.5" x2="1890" y2="835.5" stroke="#004040" stroke-width="1"/><line x1="1150" y1="863.5" x2="1890" y2="863.5" stroke="#004040" stroke-width="1"/><line x1="1150" y1="891.5" x2="1890" y2="891.5" stroke="#004040" stroke-width="1"/><line x1="1150" y1="919.5" x2="1890" y2="919.5" stroke="#004040" stroke-width="1"/><line x1="1150" y1="947.5" x2="1890" y2="947.5" stroke="#004040" stroke-width="1"/><line x1="1150" y1="975.5" x2="1890" y2="975.5" stroke="#004040" stroke-width="1"/><text x="1153" y="467" font-family="Liberation Serif" font-size="13.7" fill="#fff" style="mix-blend-mode:difference">2.9</text><text x="1153" y="495" font-family="Liberation Serif" font-size="13.7" fill="#fff" style="mix-blend-mode:difference">2.8</text><text x="1153" y="523" font-family="Liberation Serif" font-size="13.7" fill="#fff" style="mix-blend-mode:difference">2.7</text><text x="1153" y="551" font-family="Liberation Serif" font-size="13.7" fill="#fff" style="mix-blend-mode:difference">2.6</text><text x="1153" y="579" font-family="Liberation Serif" font-size="13.7" fill="#fff" style="mix-blend-mode:difference">2.5</text><text x="1153" y="607" font-family="Liberation Serif" font-size="13.7" fill="#fff" style="mix-blend-mode:difference">2.4</text><text x="1153" y="635" font-family="Liberation Serif" font-size="13.7" fill="#fff" style="mix-blend-mode:difference">2.3</text><text x="1153" y="663" font-family="Liberation Serif" font-size="13.7" fill="#fff" style="mix-blend-mode:difference">2.2</text><text x="1153" y="691" font-family="Liberation Serif" font-size="13.7" fill="#fff" style="mix-blend-mode:difference">2.1</text><text x="1153" y="719" font-family="Liberation Serif" font-size="13.7" fill="#fff" style="mix-blend-mode:difference">2</text><text x="1153" y="747" font-family="Liberation Serif" font-size="13.7" fill="#fff" style="mix-blend-mode:difference">1.9</text><text x="1153" y="775" font-family="Liberation Serif" font-size="13.7" fill="#fff" style="mix-blend-mode:difference">1.8</text><text x="1153" y="803" font-family="Liberation Serif" font-size="13.7" fill="#fff" style="mix-blend-mode:difference">1.7</text><text x="1153" y="831" font-family="Liberation Serif" font-size="13.7" fill="#fff" style="mix-blend-mode:difference">1.6</text><text x="1153" y="859" font-family="Liberation Serif" font-size="13.7" fill="#fff" style="mix-blend-mode:difference">1.5</text><text x="1153" y="887" font-family="Liberation Serif" font-size="13.7" fill="#fff" style="mix-blend-mode:difference">1.4</text><text x="1153" y="915" font-family="Liberation Serif" font-size="13.7" fill="#fff" style="mix-blend-mode:difference">1.3</text><text x="1153" y="943" font-family="Liberation Serif" font-size="13.7" fill="#fff" style="mix-blend-mode:difference">1.2</text><text x="1153" y="971" font-family="Liberation Serif" font-size="13.7" fill="#fff" style="mix-blend-mode:difference">1.1</text><text x="1226" y="1001" font-family="Liberation Serif" font-size="13.7" fill="rgb(230,230,230)">10% White</text><text x="1300" y="1001" font-family="Liberation Serif" font-size="13.7" fill="rgb(204,204,204)">20% White</text><text x="1374" y="1001" font-family="Liberation Serif" font-size="13.7" fill="rgb(178,178,178)">30% White</text><text x="1448" y="1001" font-family="Liberation Serif" font-size="13.7" fill="rgb(153,153,153)">40% White</text><text x="1522" y="1001" font-family="Liberation Serif" font-size="13.7" fill="rgb(128,128,128)">50% White</text><text x="1596" y="1001" font-family="Liberation Serif" font-size="13.7" fill="rgb(102,102,102)">60% White</text><text x="1670" y="1001" font-family="Liberation Serif" font-size="13.7" fill="rgb(77,77,77)">70% White</text><text x="1744" y="1001" font-family="Liberation Serif" font-size="13.7" fill="rgb(51,51,51)">80% White</text><text x="1818" y="1001" font-family="Liberation Serif" font-size="13.7" fill="rgb(25,25,25)">90% White</text><path d="M1183,611.1 L1220,590.6 L1257.8,590.6 L1295,601.7 L1331.7,589.7 L1368.6,588.9 L1405.8,590.6 L1442.8,590.6 L1481,594.7 L1517.5,594.7 L1554.7,599.4 L1591.7,597.5 L1628.9,602.8 L1665.8,602.8 L1703.3,601.7 L1740.3,612 L1777.8,610.6 L1814.4,603.6 L1852,618.9" fill="none" stroke="#ffff00" stroke-width="2"/><rect x="1179.0" y="607.1" width="8" height="8" fill="#ffff00"/><rect x="1216.0" y="586.6" width="8" height="8" fill="#ffff00"/><rect x="1253.8" y="586.6" width="8" height="8" fill="#ffff00"/><rect x="1291.0" y="597.7" width="8" height="8" fill="#ffff00"/><rect x="1327.7" y="585.7" width="8" height="8" fill="#ffff00"/><rect x="1364.6" y="584.9" width="8" height="8" fill="#ffff00"/><rect x="1401.8" y="586.6" width="8" height="8" fill="#ffff00"/><rect x="1438.8" y="586.6" width="8" height="8" fill="#ffff00"/><rect x="1477.0" y="590.7" width="8" height="8" fill="#ffff00"/><rect x="1513.5" y="590.7" width="8" height="8" fill="#ffff00"/><rect x="1550.7" y="595.4" width="8" height="8" fill="#ffff00"/><rect x="1587.7" y="593.5" width="8" height="8" fill="#ffff00"/><rect x="1624.9" y="598.8" width="8" height="8" fill="#ffff00"/><rect x="1661.8" y="598.8" width="8" height="8" fill="#ffff00"/><rect x="1699.3" y="597.7" width="8" height="8" fill="#ffff00"/><rect x="1736.3" y="608.0" width="8" height="8" fill="#ffff00"/><rect x="1773.8" y="606.6" width="8" height="8" fill="#ffff00"/><rect x="1810.4" y="599.6" width="8" height="8" fill="#ffff00"/><rect x="1848.0" y="614.9" width="8" height="8" fill="#ffff00"/><line x1="1150" y1="611.5" x2="1852" y2="611.5" stroke="#003838" stroke-width="1"/><line x1="1150" y1="611.5" x2="1852" y2="611.5" stroke="#fff" stroke-width="1" stroke-dasharray="4,3"/><rect x="1179" y="607" width="8" height="8" fill="#e4e4e4"/><rect x="1216" y="607" width="8" height="8" fill="#e4e4e4"/><rect x="1253.8" y="607" width="8" height="8" fill="#e4e4e4"/><rect x="1291" y="607" width="8" height="8" fill="#e4e4e4"/><rect x="1327.7" y="607" width="8" height="8" fill="#e4e4e4"/><rect x="1364.6" y="607" width="8" height="8" fill="#e4e4e4"/><rect x="1401.8" y="607" width="8" height="8" fill="#e4e4e4"/><rect x="1438.8" y="607" width="8" height="8" fill="#e4e4e4"/><rect x="1477" y="607" width="8" height="8" fill="#e4e4e4"/><rect x="1513.5" y="607" width="8" height="8" fill="#e4e4e4"/><rect x="1550.7" y="607" width="8" height="8" fill="#e4e4e4"/><rect x="1587.7" y="607" width="8" height="8" fill="#e4e4e4"/><rect x="1624.9" y="607" width="8" height="8" fill="#e4e4e4"/><rect x="1661.8" y="607" width="8" height="8" fill="#e4e4e4"/><rect x="1699.3" y="607" width="8" height="8" fill="#e4e4e4"/><rect x="1736.3" y="607" width="8" height="8" fill="#e4e4e4"/><rect x="1773.8" y="607" width="8" height="8" fill="#e4e4e4"/><rect x="1810.4" y="607" width="8" height="8" fill="#e4e4e4"/><rect x="1848" y="607" width="8" height="8" fill="#e4e4e4"/><text x="1481" y="457" font-family="Liberation Sans" font-weight="bold" font-size="14.5" fill="#d8d800">EOTF(Gamma)</text><text x="1725" y="963" font-family="Liberation Sans" font-weight="bold" font-size="16" fill="#999">hcfr.sourceforge.net</text></svg>
<div style="position:absolute;left:3px;top:1022px;width:1917px;height:20px;background:#f0f0f0;"></div>
<div style="position:absolute;left:20px;top:1030px;width:1824px;height:2px;background:#808080;"></div>
<div style="position:absolute;left:0px;top:1041px;width:1920px;height:2px;background:#000;"></div>
<div style="position:absolute;left:0px;top:1044px;width:1920px;height:17px;background:#f0f0f0;"></div>
<svg style="position:absolute;left:0;top:1042px" width="340" height="20" viewBox="0 1042 340 20"><rect x="1.5" y="1043.5" width="51" height="16" fill="#f0f0f0" stroke="#000" stroke-width="1"/><line x1="18.5" y1="1043" x2="18.5" y2="1060" stroke="#000"/><line x1="35.5" y1="1043" x2="35.5" y2="1060" stroke="#000"/><path d="M6 1048 L13 1055 M13 1048 L6 1055" stroke="#000" stroke-width="1.3"/><path d="M29 1048 V1055 L25 1051.5 Z" fill="#000"/><path d="M42 1048 V1055 L46 1051.5 Z" fill="#000"/><path d="M312.5 1060.5 L321 1042.5 M296 1042.5 L300 1051 L296 1060.5 M239 1042.5 L235 1051 L239 1060.5" fill="none" stroke="#000"/><path d="M128 1042.5 L123 1051 L127 1060.5 H187 L191 1051 L187 1042.5" fill="#ececec" stroke="#000"/><path d="M188 1042.5 L192 1051 L196 1060.5 H238 L242 1051 L238 1042.5" fill="#ececec" stroke="#000"/><path d="M240 1042.5 L244 1051 L248 1060.5 H312 L321 1042.5" fill="#ececec" stroke="#000"/><path d="M55 1042.5 L63 1060.5 H119 L128 1042.5" fill="#fff" stroke="#000"/><path d="M55.5 1042.5 H128" stroke="#fff" stroke-width="1"/></svg>
<div style="position:absolute;left:66px;top:1047px;font-size:10.5px;line-height:1;color:#000;font-weight:bold;white-space:nowrap;font-family:'Liberation Sans', sans-serif;">Measures</div>
<div style="position:absolute;left:134px;top:1047px;font-size:10px;line-height:1;color:#000;font-weight:normal;white-space:nowrap;font-family:'Liberation Sans', sans-serif;letter-spacing:-0.4px">Luminance</div>
<div style="position:absolute;left:200px;top:1047px;font-size:10px;line-height:1;color:#000;font-weight:normal;white-space:nowrap;font-family:'Liberation Sans', sans-serif;letter-spacing:-0.6px">Gamma</div>
<div style="position:absolute;left:255px;top:1047px;font-size:10px;line-height:1;color:#000;font-weight:normal;white-space:nowrap;font-family:'Liberation Sans', sans-serif;letter-spacing:-0.4px">RGB Levels</div>
<svg style="position:absolute;left:1751px;top:1044px" width="15" height="15"><path d="M0.5 0.5 H13.5 V8 L12.5 9 L11.5 13.5 H8.5 L7.5 9 L6.5 9 L5.5 13.5 H2.5 L1.5 9 L0.5 8 Z" fill="#8c8c00" stroke="#000" stroke-width="1"/><path d="M7.5 8.5 H12.5 L11.5 13 H8.5 Z" fill="#ffff00"/><rect x="2" y="2" width="8" height="6" fill="#fff"/><path d="M3 3.5 H6 V4.5 H9 V7 H5 V5 H3 Z" fill="#f00"/></svg>
<div style="position:absolute;left:1846px;top:1045px;width:12px;height:12px;background:#fff;border-top:2px solid #555;border-left:2px solid #555;border-right:1px solid #fff;border-bottom:1px solid #fff;"></div>
<div style="position:absolute;left:1865px;top:1046px;font-size:10.5px;line-height:1;color:#000;font-weight:normal;white-space:nowrap;font-family:'Liberation Sans', sans-serif;">Reference</div>
<div style="position:absolute;left:0px;top:1061px;width:1920px;height:17px;background:#e8eef7;"></div>
<div style="position:absolute;left:3px;top:1065px;font-size:12px;line-height:1;color:#000;font-weight:normal;white-space:nowrap;font-family:'Liberation Sans', sans-serif;">Ready</div>
<div style="position:absolute;left:1742px;top:1062px;width:75px;height:16px;border-top:1px solid #a8bcd8;border-left:1px solid #a8bcd8;border-right:1px solid #a8bcd8;"></div>
<div style="position:absolute;left:1820px;top:1062px;width:28px;height:16px;border-top:1px solid #a8bcd8;border-left:1px solid #a8bcd8;border-right:1px solid #a8bcd8;"></div>
<div style="position:absolute;left:1851px;top:1062px;width:33px;height:16px;border-top:1px solid #a8bcd8;border-left:1px solid #a8bcd8;border-right:1px solid #a8bcd8;"></div>
<div style="position:absolute;left:1887px;top:1062px;width:33px;height:16px;border-top:1px solid #a8bcd8;border-left:1px solid #a8bcd8;border-right:1px solid #a8bcd8;"></div>
<div style="position:absolute;left:1853px;top:1065px;font-size:12px;line-height:1;color:#000;font-weight:normal;white-space:nowrap;font-family:'Liberation Sans', sans-serif;">NUM</div>
<div style="position:absolute;left:0px;top:1078px;width:1920px;height:2px;background:#2b2b2b;"></div>
<!--BODY-->
</body></html>
